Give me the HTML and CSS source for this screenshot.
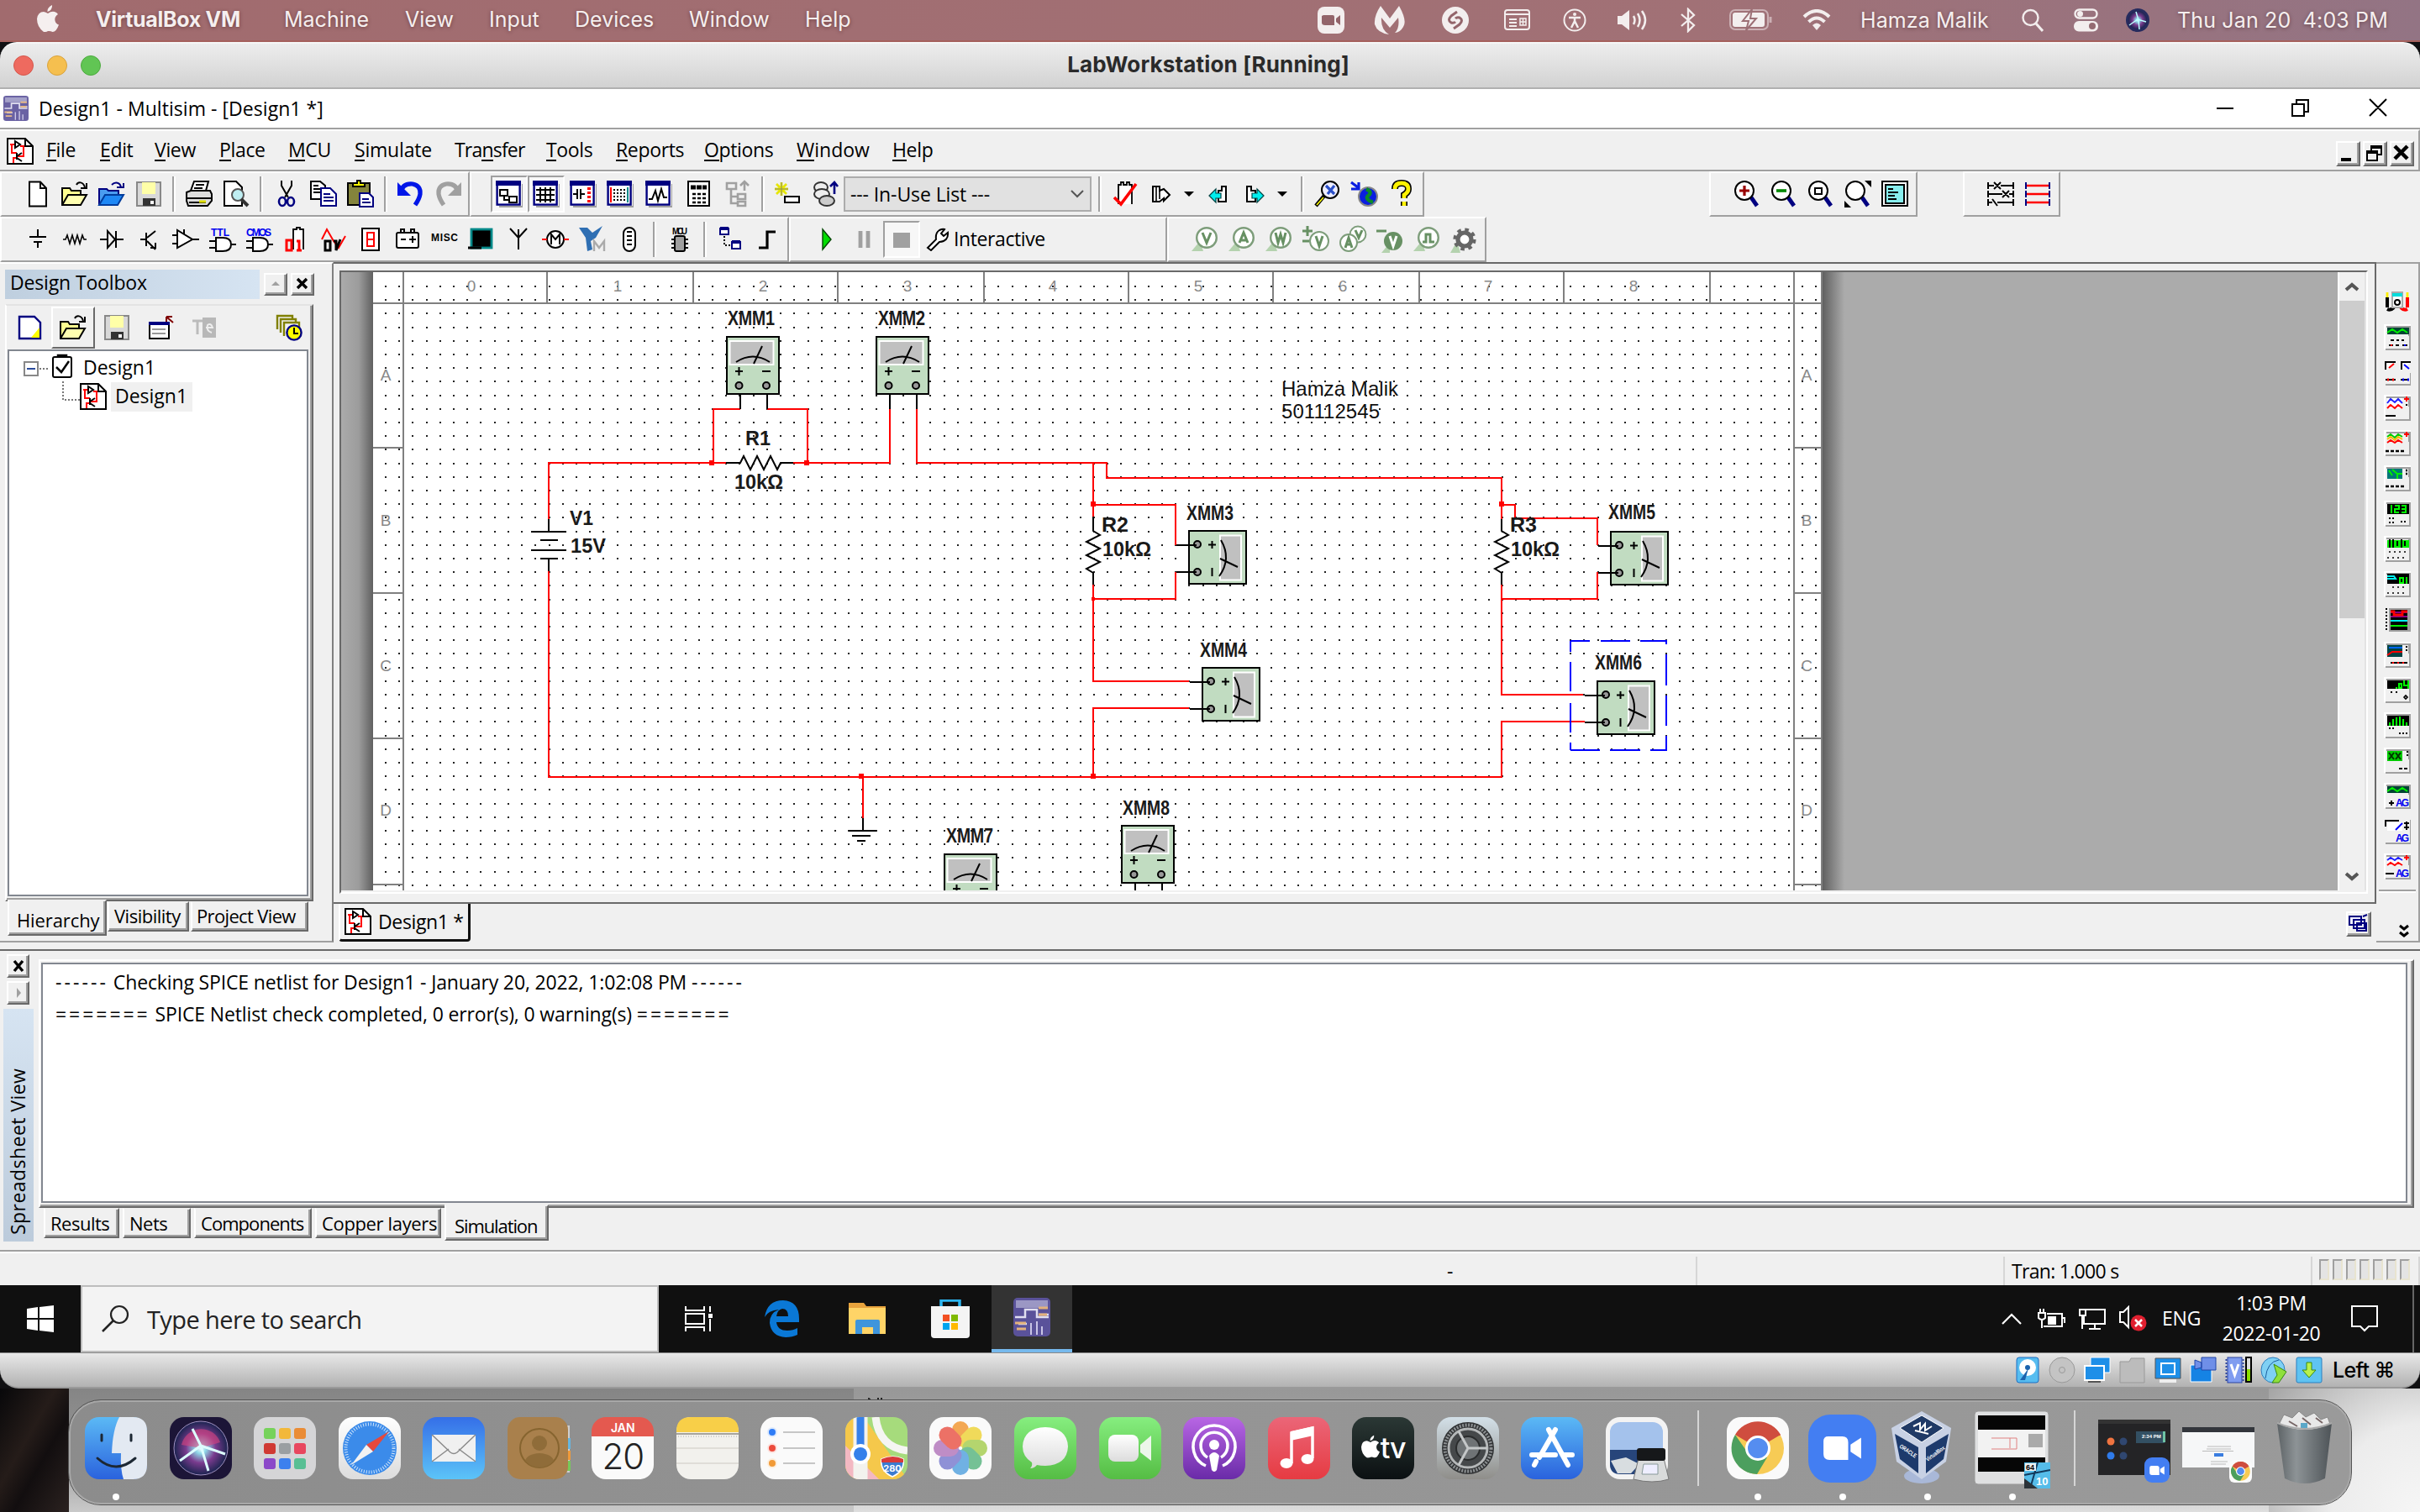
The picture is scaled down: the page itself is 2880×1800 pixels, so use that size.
FILE: index.html
```html
<!DOCTYPE html>
<html lang="en">
<head>
<meta charset="utf-8">
<title>LabWorkstation [Running]</title>
<link rel="stylesheet" href="styles.css">
</head>
<body>
<svg class="defs" width="0" height="0">
  <defs>
    <symbol id="sch" viewBox="0 0 16 16"><path d="M.5.5H11L15.500 5V15.500H.5Z" fill="#fff" stroke="#000"/><path d="M11 1V5H15" fill="none" stroke="#000"/><path d="M2 4H5M3 4V9H6M8 5H10V11H6M4 15V12H6" stroke="red" fill="none"/><path d="M5 2V6L8 4ZM6 9V13M6 11L9 9M6 12L9 14" fill="none" stroke="#000"/></symbol>
    <symbol id="mmv" viewBox="0 0 66 70" overflow="visible"><rect x="1" y="1" width="62" height="68" fill="#c1dcc1" stroke="#000" stroke-width="2"/><rect x="4.500" y="6" width="52" height="28" fill="#c0c0c0" stroke="#fff" stroke-width="2"/><path d="M12 31Q32 18 52 31M43 12L33 33M11 42H20M15.500 37V47M43 42H53" fill="none" stroke="#000" stroke-width="2"/><circle cx="15.500" cy="59" r="4" fill="#999" stroke="#000" stroke-width="2"/><circle cx="48" cy="59" r="4" fill="#999" stroke="#000" stroke-width="2"/></symbol>
    <symbol id="mmh" viewBox="0 0 70 66" overflow="visible"><rect x="1" y="1" width="68" height="63" fill="#c1dcc1" stroke="#000" stroke-width="2"/><rect x="38" y="6.500" width="25" height="53" fill="#c0c0c0" stroke="#fff" stroke-width="2"/><path d="M39 12Q52 34 37 55M38 34L59 44M24 17.500H33M28.500 13V22M28.500 45V55" fill="none" stroke="#000" stroke-width="2"/><circle cx="11" cy="17" r="4" fill="#999" stroke="#000" stroke-width="2"/><circle cx="11" cy="50" r="4" fill="#999" stroke="#000" stroke-width="2"/><path d="M-14 18H10M-14 50H10" stroke="#000" stroke-width="2"/></symbol>
    <symbol id="mag" viewBox="0 0 16 16"><path d="M10.500 10L14 15" stroke="#000080" stroke-width="2.400"/><ellipse cx="6.500" cy="6" rx="5.500" ry="5.500" fill="#fff" stroke="#000"/></symbol>
    <symbol id="ins" viewBox="0 0 16 16"><path d="M0 .5H16M.5 0V15" stroke="#fff"/><path d="M1 15H16M15.500 1V15" stroke="#a0a0a0"/><path d="M1.500 1.500H15V7" fill="none" stroke="#a0a0a0"/></symbol>
    <symbol id="probe" viewBox="0 0 16 16"><path d="M0 15L5 9L7 15Z" fill="#b4d2ae"/><circle cx="9" cy="7" r="5.900" fill="#fff" stroke="#7d9d7a" stroke-width="1.200"/></symbol>
    <symbol id="folder" viewBox="0 0 16 16"><path d="M.5 14.500V4.500H5L6 6H11.500V8" fill="#ffff90" stroke="#000"/><path d="M.5 14.500L4 8.500H15L11.500 14.500Z" fill="#ffffb0" stroke="#000"/><path d="M9 2.500C10 .5 13 .5 14 4M11.500 4.500H15V1.500" fill="none" stroke="#000"/></symbol>
    <symbol id="disk" viewBox="0 0 16 16"><path d="M1 1H15V15H1Z" fill="#d8d8d8" stroke="#888"/><path d="M4 1H12V8H4Z" fill="#ffffa8"/><path d="M4.500 10.500H12V15H4.500Z" fill="#333"/><rect x="9" y="12" width="2" height="2" fill="#fff"/></symbol>
    <symbol id="win" viewBox="0 0 16 16"><path d="M2 15.500H16V2" fill="none" stroke="#a0a0a0"/><rect x=".8" y=".8" width="13.500" height="13.500" fill="#fff" stroke="#000080" stroke-width="1.200"/><rect x="0" y="0" width="15" height="3" fill="#000080"/></symbol>
    <symbol id="cam" viewBox="0 0 16 10"><path d="M2 0H8Q10.500 0 10.500 2.500V10H2.500Q0 10 0 7.500V2Q0 0 2 0ZM11.500 3.500L16 .5V9.500L11.500 6.500Z" fill="#fff"/></symbol>
    <symbol id="apple" viewBox="0 0 26 32"><path d="M18 0Q18.500 6 12.500 8Q12 3 18 0ZM13 10Q17 7 21 8Q24 9 25 11Q20.500 14 21.500 18.500Q22 22 26 23.500Q23 32 18.500 32Q16 30.500 13 31Q10 32.500 8 32Q0 26 0 16.500Q1 8 8 8Q10.500 8.500 13 10Z" fill="currentColor"/></symbol>
    <symbol id="chrome" viewBox="0 0 74 74"><rect width="74" height="74" rx="17" fill="#fafafa"/><circle cx="37" cy="37" r="31" fill="#f7cb55"/><path d="M37 37L10 21A31 31 0 0 1 64 21Z" fill="#cf4d3f"/><path d="M37 6A31 31 0 0 1 64 22H37Z" fill="#cf4d3f"/><path d="M10 21A31 31 0 0 0 36 68L48 48L26 44Z" fill="#4c9f5e"/><circle cx="37" cy="37" r="15" fill="#fff"/><circle cx="37" cy="37" r="12" fill="#558df0"/></symbol>
    <symbol id="multi" viewBox="0 0 44 46"><rect width="44" height="46" rx="5" fill="#5a529a"/><path d="M3 3H41V12H3Z" fill="#9b97c4"/><path d="M2 23H14V14H28V23H42M6 31H16M30 20H42" stroke="#e0def0" stroke-width="2.500" fill="none"/><path d="M30 12H41M30 20H40M2 30H15M4 37H15" stroke="#e4b27c" stroke-width="3"/><path d="M21 30V44M28 28V44M34 34V44" stroke="#c9c5e6" stroke-width="2"/></symbol>
    <linearGradient id="gb" x1="0" y1="0" x2="0" y2="1"><stop offset="0" stop-color="#5bb9f5"/><stop offset="1" stop-color="#2a62dd"/></linearGradient>
    <linearGradient id="gm" x1="0" y1="0" x2="0" y2="1"><stop offset="0" stop-color="#356fe8"/><stop offset="1" stop-color="#5cc4f8"/></linearGradient>
    <linearGradient id="gg" x1="0" y1="0" x2="0" y2="1"><stop offset="0" stop-color="#86ee7f"/><stop offset="1" stop-color="#55bd44"/></linearGradient>
    <linearGradient id="gp" x1="0" y1="0" x2="0" y2="1"><stop offset="0" stop-color="#b866e4"/><stop offset="1" stop-color="#6a2ba8"/></linearGradient>
    <linearGradient id="gr" x1="0" y1="0" x2="0" y2="1"><stop offset="0" stop-color="#eb6678"/><stop offset="1" stop-color="#e63b42"/></linearGradient>
    <linearGradient id="gs" x1="0" y1="0" x2="0" y2="1"><stop offset="0" stop-color="#d3e0e8"/><stop offset="1" stop-color="#8f8e8a"/></linearGradient>
    <linearGradient id="gw" x1="0" y1="0" x2="0" y2="1"><stop offset="0" stop-color="#fff"/><stop offset="1" stop-color="#dcdcdc"/></linearGradient>
    <linearGradient id="gt" x1="0" y1="0" x2="1" y2="0"><stop offset="0" stop-color="#5d6366"/><stop offset=".35" stop-color="#8d9396"/><stop offset="1" stop-color="#4d5357"/></linearGradient>
    <radialGradient id="gi"><stop offset="0" stop-color="#fff"/><stop offset=".2" stop-color="#8fd8e8"/><stop offset=".55" stop-color="#7a3b8e"/><stop offset="1" stop-color="#1b2450"/></radialGradient>
    <linearGradient id="shl" x1="0" y1="0" x2="1" y2="0"><stop offset="0" stop-color="#ababab"/><stop offset=".55" stop-color="#9c9c9c"/><stop offset="1" stop-color="#606060"/></linearGradient>
    <linearGradient id="shr" x1="0" y1="0" x2="1" y2="0"><stop offset="0" stop-color="#606060"/><stop offset="1" stop-color="#ababab"/></linearGradient>
  </defs>
</svg>

<header class="macbar">
  <nav class="macmenu">
    <svg class="applelogo" viewBox="0 0 26 32"><use href="#apple"/></svg>
    <b>VirtualBox VM</b><span>Machine</span><span>View</span><span>Input</span><span>Devices</span><span>Window</span><span>Help</span>
  </nav>
  <div class="macstatus">
    <svg width="34" height="34" viewBox="0 0 34 34"><rect x="1" y="1" width="32" height="32" rx="8" fill="#f3eeee"/><path d="M8 11H19Q21 11 21 13V23H10Q6 23 6 20V12ZM23 15L28 11V23L23 19Z" fill="#93646a"/></svg>
    <svg width="38" height="34" viewBox="0 0 38 34"><path d="M8 0L19 15L30 0Q40 18 35 25Q31 32 25 32Q31 26 29 14L19 26L9 14Q8 28 18 34Q4 32 1 22Q0 12 8 0Z" fill="#f3eeee"/></svg>
    <svg width="34" height="34" viewBox="0 0 34 34"><circle cx="17" cy="17" r="16" fill="#f3eeee"/><path d="M19 7L12 12Q7 17 12 20Q15 21 17 19M15 27L22 22Q27 17 22 14Q19 13 17 15" fill="none" stroke="#93646a" stroke-width="3"/></svg>
    <svg width="32" height="26" viewBox="0 0 32 26"><rect x="1" y="1" width="29" height="23" rx="3" fill="none" stroke="#f3eeee" stroke-width="2"/><path d="M1 6H30M6 12H15M6 16H15M6 20H15" stroke="#f3eeee" stroke-width="2"/><path d="M19 11H26V19H19ZM19 15H26M22.500 11V19" stroke="#f3eeee" fill="none" stroke-width="1.500"/></svg>
    <svg width="30" height="30" viewBox="0 0 30 30"><circle cx="15" cy="15" r="12.500" fill="none" stroke="#f3eeee" stroke-width="2"/><circle cx="15" cy="8" r="2" fill="#f3eeee"/><path d="M8 12H22M15 12V17M15 16L11 24M15 16L19 24" stroke="#f3eeee" stroke-width="2.500"/></svg>
    <svg width="40" height="28" viewBox="0 0 40 28"><path d="M1 9H6L15 2V26L6 19H1Z" fill="#f3eeee"/><path d="M20 9Q23 14 20 19M25 6Q30 14 25 22M30 3Q38 14 30 25" fill="none" stroke="#f3eeee" stroke-width="2.500"/></svg>
    <svg width="20" height="30" viewBox="0 0 20 30"><path d="M2 8L17 21L10 28V2L17 9L2 22" fill="none" stroke="#f3eeee" stroke-width="2.300"/></svg>
    <svg width="52" height="26" viewBox="0 0 52 26"><rect x="1" y="1" width="45" height="23" rx="6" fill="none" stroke="#cbb0b4" stroke-width="2"/><rect x="4" y="4" width="38" height="17" rx="3" fill="#f3eeee"/><path d="M27 0L16 14H23L20 25L32 11H25Z" fill="#f3eeee" stroke="#9c6f75" stroke-width="2"/><path d="M49 9V16" stroke="#cbb0b4" stroke-width="3"/></svg>
    <svg width="34" height="26" viewBox="0 0 34 26"><path d="M2 9Q17 -5 32 9M7.500 15Q17 6 26.500 15" fill="none" stroke="#f3eeee" stroke-width="4"/><path d="M12 19Q17 14 22 19L17 25Z" fill="#f3eeee"/></svg>
    <span>Hamza Malik</span>
    <svg width="26" height="28" viewBox="0 0 26 28"><circle cx="10.500" cy="11" r="9" fill="none" stroke="#f3eeee" stroke-width="2.400"/><path d="M17 18L25 27" stroke="#f3eeee" stroke-width="3"/></svg>
    <svg width="30" height="28" viewBox="0 0 30 28"><rect x="1.500" y="1.500" width="26" height="10" rx="5" fill="none" stroke="#f3eeee" stroke-width="2.400"/><circle cx="7.500" cy="6.500" r="3.500" fill="#f3eeee"/><rect x="0" y="15" width="29" height="12.500" rx="6" fill="#f3eeee"/><circle cx="22" cy="21" r="4" fill="#946b72"/></svg>
    <svg width="28" height="28" viewBox="0 0 28 28"><circle cx="14" cy="14" r="14" fill="#262b5e"/><circle cx="14" cy="14" r="11" fill="url(#gi)"/><path d="M4 20L14 13L24 16M12 4L15 14L16 25" stroke="#bff" stroke-width="1.500" fill="none"/></svg>
    <span>Thu Jan 20&nbsp; 4:03 PM</span>
  </div>
</header>

<main class="vm">
  <div class="vmtitle"><div class="lights"><i></i><i></i><i></i></div><h1>LabWorkstation [Running]</h1></div>

  <div class="wtitle">
    <svg class="wicon" viewBox="0 0 44 46" preserveAspectRatio="none"><use href="#multi"/></svg>
    <span>Design1 - Multisim - [Design1 *]</span>
    <svg class="wctl" viewBox="0 0 204 24"><path d="M1 13H21M91 8H105V22H91ZM96 7V3H110V17H106M183 2L203 22M203 2L183 22" fill="none" stroke="#000" stroke-width="2"/></svg>
  </div>

  <div class="menubar">
    <svg width="32" height="32"><use href="#sch"/></svg>
    <span><u>F</u>ile</span><span><u>E</u>dit</span><span><u>V</u>iew</span><span><u>P</u>lace</span><span><u>M</u>CU</span><span><u>S</u>imulate</span><span>Tra<u>n</u>sfer</span><span><u>T</u>ools</span><span><u>R</u>eports</span><span><u>O</u>ptions</span><span><u>W</u>indow</span><span><u>H</u>elp</span>
    <div class="mdictl">
      <i class="btn"><svg viewBox="0 0 24 24"><path d="M4 20H16" stroke="#000" stroke-width="4"/></svg></i>
      <i class="btn"><svg viewBox="0 0 24 24"><path d="M8 9V5H20V14H15M3 11H15V21H3Z" fill="none" stroke="#000" stroke-width="2"/><path d="M7 5H21M2 11H16" stroke="#000" stroke-width="4"/></svg></i>
      <i class="btn"><svg viewBox="0 0 24 24"><path d="M4 4L19 19M19 4L4 19" stroke="#000" stroke-width="4.500"/></svg></i>
    </div>
  </div>

  <div class="toolrow">
    <div class="group g1">
      <i class="c"><svg viewBox="0 0 16 16"><path d="M3 .8H9.500L13 4.500V15.200H3Z" fill="#fff" stroke="#000"/><path d="M9.500 1V4.500H13" fill="none" stroke="#000"/></svg></i>
      <i class="c"><svg><use href="#folder"/></svg></i>
      <i class="c"><svg viewBox="0 0 16 16"><path d="M.5 14.500V5H5L6 6H12V8" fill="#4a9cf0" stroke="#000080"/><path d="M.5 14.500L4 8.500H15L11.500 14.500Z" fill="#1e88f5" stroke="#003c9c"/><path d="M8 2.500C10 .5 13 1 13.500 4M11 4H15V1.500" fill="none" stroke="#000080"/></svg></i>
      <i class="c"><svg><use href="#disk"/></svg></i>
      <i class="sep"></i>
      <i class="c"><svg viewBox="0 0 16 16"><path d="M5 .5H13.500L12 6H3Z" fill="#fff" stroke="#000"/><path d="M6 2.500H11M5 4.500H10M3 8.500H13" stroke="#000"/><path d="M.5 7L3 6H14.500L15.500 8V12L13 15H1.500L.5 12Z" fill="#ddd" stroke="#000"/><path d="M1 10.500H15M2 13H12" stroke="#000"/><path d="M8 12.500H12" stroke="#dd0" stroke-width="1.500"/></svg></i>
      <i class="c"><svg viewBox="0 0 16 16"><path d="M1 .5H8L11.500 4V15H1Z" fill="#fff" stroke="#000"/><circle cx="9" cy="8.500" r="3.500" fill="#bfeef2" stroke="#555"/><path d="M11 11L15 15" stroke="#333" stroke-width="2"/></svg></i>
      <i class="sep"></i>
      <i class="c"><svg viewBox="0 0 16 16"><path d="M5 0V3L9 10M11 0V3L7 10" fill="none" stroke="#000"/><ellipse cx="5.500" cy="12.500" rx="2" ry="2.500" fill="none" stroke="#000080" stroke-width="1.300"/><ellipse cx="10.500" cy="12.500" rx="2" ry="2.500" fill="none" stroke="#000080" stroke-width="1.300"/></svg></i>
      <i class="c"><svg viewBox="0 0 16 16"><path d="M.5.5H6L9 3V11H.5Z" fill="#fff" stroke="#000"/><path d="M2 3H5M2 5H7M2 7H7" stroke="#000"/><path d="M6.500 4.500H12L15.500 8V15H6.500Z" fill="#fff" stroke="#000080"/><path d="M8 8H12M8 10H14M8 12H14" stroke="#000080"/></svg></i>
      <i class="c"><svg viewBox="0 0 16 16"><path d="M.5 1.500H13.500V14.500H.5Z" fill="#84843c" stroke="#000"/><path d="M3.500 3.500H10.500V1.500H8V0H6V1.500H3.500Z" fill="#ff0" stroke="#000"/><path d="M7.500 7.500H13L15.500 10V15.500H7.500Z" fill="#fff" stroke="#000080"/><path d="M9 11H13M9 13H14" stroke="#000080"/></svg></i>
      <i class="sep"></i>
      <i class="c"><svg viewBox="0 0 16 16"><path d="M2 7Q3 1.500 9 2Q14 3 13.500 8Q13 11 10.500 14.500" fill="none" stroke="#0016e8" stroke-width="2.600"/><path d="M0 1V9H8Z" fill="#0016e8"/></svg></i>
      <i class="c"><svg viewBox="0 0 16 16"><path d="M14 7Q13 1.500 7 2Q2 3 2.500 8Q3 11 5.500 14.500" fill="none" stroke="#a0a0a0" stroke-width="2.600"/><path d="M16 1V9H8Z" fill="#a0a0a0"/></svg></i>
    </div>
    <div class="group g2">
      <i class="c on"><svg viewBox="0 0 16 16"><use href="#win"/><path d="M2.500 5.500H7V9H2.500ZM8 9.500H12.500V13H8ZM5 9V11.500H8" fill="#fff" stroke="#000"/></svg></i>
      <i class="c on"><svg viewBox="0 0 16 16"><use href="#win"/><path d="M2 5.500H13M2 8.500H13M2 11.500H13M4.500 4V13M7.500 4V13M10.500 4V13" stroke="#000"/></svg></i>
      <i class="c"><svg viewBox="0 0 16 16"><use href="#win"/><path d="M2 8H4.500M4.500 5V11M6.500 5V11M6.500 8H9" stroke="#000"/><path d="M11.500 4V13" stroke="red" stroke-width="2" stroke-dasharray="1.500 1"/></svg></i>
      <i class="c"><svg viewBox="0 0 16 16"><use href="#win"/><path d="M2.500 4V13" stroke="red"/><path d="M4 5.500H11M4 7.500H11M4 9.500H11M4 11.500H11" stroke="#000" stroke-dasharray="1 1"/><path d="M12.500 4V13" stroke="#088"/></svg></i>
      <i class="c wide"><svg viewBox="0 0 16 16"><use href="#win"/><path d="M2 11L4 11L6 6L7.500 12L9.500 5L11 10H13" fill="none" stroke="#000"/></svg></i>
      <i class="c wide"><svg viewBox="0 0 16 16"><rect x="1.500" y=".5" width="12.500" height="14.500" fill="#fff" stroke="#000"/><path d="M3 4H12.500" stroke="#000" stroke-width="2.500" stroke-dasharray="3 .5"/><path d="M4 8H12M4 10.500H12M4 13H12" stroke="#000" stroke-width="1.300" stroke-dasharray="2 1"/></svg></i>
      <i class="c"><svg viewBox="0 0 16 16"><path d="M1.500 1.500H7V5H1.500ZM8 8H12.500V11H8ZM8 12.500H12.500V15H8ZM4 5V13.500H8M4 9.500H8M12 6V1M9.500 3L12 .5L14.500 3" fill="none" stroke="#a0a0a0" stroke-width="1.300"/></svg></i>
      <i class="sep"></i>
      <i class="c"><svg viewBox="0 0 16 16"><path d="M0 5H8M4 1V9M1 2L7 8M7 2L1 8" stroke="#e6e600" stroke-width="1.400"/><path d="M4 1V9M0 5H8" stroke="#886" stroke-width=".5"/><path d="M6 9.500H14.500V13H6Z" fill="#fff" stroke="#000"/></svg></i>
      <i class="c"><svg viewBox="0 0 16 16"><ellipse cx="5.500" cy="4" rx="4" ry="3" fill="#eee" stroke="#333"/><ellipse cx="6" cy="8" rx="4.500" ry="3" fill="#eee" stroke="#333"/><ellipse cx="9" cy="12" rx="4.500" ry="3" fill="#ccc" stroke="#333"/><path d="M13.500 8V2M11 3.500L13.500 1L15.500 3.500" stroke="#000080" fill="none" stroke-width="1.300"/></svg></i>
      <div class="combo"><span>--- In-Use List ---</span><svg width="18" height="12" viewBox="0 0 18 12"><path d="M2 2L9 9L16 2" fill="none" stroke="#555" stroke-width="2"/></svg></div>
      <i class="sep"></i>
      <i class="c"><svg viewBox="0 0 16 16"><path d="M4 14V2.500H5.500V1H7V2.500H9V1H10.500V2.500H12V14" fill="#fff" stroke="#000" stroke-width=".9"/><path d="M1.500 10L5.500 14L14.500 2" fill="none" stroke="red" stroke-width="1.800"/></svg></i>
      <i class="c"><svg viewBox="0 0 16 16"><path d="M2.500 12.500V3.500H6.500V6L9 5L12.500 8.500L9 12V10.500L6.500 12.500Z" fill="#fff" stroke="#000"/><path d="M4.500 4V12M6.500 6V11" stroke="#000" stroke-width=".8"/></svg></i><i class="caret first"></i>
      <i class="c"><svg viewBox="0 0 16 16"><path d="M12.500 12.500V3.500H10V6H8V12.500Z" fill="#fff" stroke="#000"/><path d="M2.500 9L6.500 5V7.500H9.500V10.500H6.500V13Z" fill="#0ee" stroke="#044" stroke-width=".6"/></svg></i>
      <i class="c"><svg viewBox="0 0 16 16"><path d="M3 12.500V3.500H5.500V6H8V12.500Z" fill="#fff" stroke="#000"/><path d="M13 9L9 5V7.500H6V10.500H9V13Z" fill="#0ee" stroke="#044" stroke-width=".6"/></svg></i><i class="caret"></i>
      <i class="sep s2nd"></i>
      <i class="c"><svg viewBox="0 0 16 16"><circle cx="9.500" cy="5.500" r="5" fill="#eef" stroke="#000"/><path d="M7 3L12 8M12 3L8 8" stroke="#2b50c8" stroke-width="1.600"/><path d="M6 9L1 15" stroke="#000" stroke-width="2.200"/><path d="M5.500 10L1.500 14.500" stroke="#ff0" stroke-width=".8"/></svg></i>
      <i class="c"><svg viewBox="0 0 16 16"><circle cx="10" cy="9.500" r="5.500" fill="#0a1ee0" stroke="#888"/><path d="M9 5Q13 7 10 9Q8 11 13 13" stroke="#0a8a2a" stroke-width="2.200" fill="none"/><path d="M0 1L4 4M4.500 1V5H0" stroke="#0a1ee0" fill="none" stroke-width="1.600"/></svg></i>
      <i class="c"><svg viewBox="0 0 16 16"><path d="M4 5Q4 1.500 8 1.500Q12 1.500 12 5Q12 7 9.500 8.500V10.500M9.500 12.500V15" fill="none" stroke="#000" stroke-width="4"/><path d="M4 5Q4 1.500 8 1.500Q12 1.500 12 5Q12 7 9.500 8.500V10.500M9.500 12.500V15" fill="none" stroke="#fff200" stroke-width="2.400"/></svg></i>
    </div>
    <div class="group g3">
      <i class="c"><svg viewBox="0 0 16 16"><use href="#mag"/><path d="M3.500 6H9.500M6.500 3V9" stroke="#900" stroke-width="1.600"/></svg></i>
      <i class="c"><svg viewBox="0 0 16 16"><use href="#mag"/><path d="M3.500 6H9.500" stroke="#080" stroke-width="1.800"/></svg></i>
      <i class="c"><svg viewBox="0 0 16 16"><use href="#mag"/><path d="M4.500 4.500H8.500V8H4.500Z" fill="none" stroke="#000"/></svg></i>
      <i class="c"><svg viewBox="0 0 16 16"><use href="#mag"/><path d="M12 0H16V4ZM0 12V16H4Z" fill="#000"/></svg></i>
      <i class="c"><svg viewBox="0 0 16 16"><rect x=".5" y=".5" width="15" height="14.500" fill="#fff" stroke="#000"/><rect x="2.500" y="2.500" width="11" height="11" fill="#8ee" stroke="#000"/><path d="M4 5H7M4 7H10M4 9H8M4 11H9" stroke="#000"/></svg></i>
    </div>
    <div class="group g4">
      <i class="c"><svg viewBox="0 0 16 16"><path d="M0 3H4M8 3H16M0 8H9M13 8H16M0 13H3M6 13H16M.5 1V5M15.500 1V5M.5 6V10M15.500 6V10M.5 11V15M15.500 11V15M4 1L8 5M8 1L4 5M9 6L13 10M13 6L9 10M3 11L6 15" stroke="#000"/></svg></i>
      <i class="c"><svg viewBox="0 0 16 16"><path d="M1 3H15M1 8H15M1 13H15" stroke="red" stroke-width="1.200"/><path d="M1 1V5M15 1V5M1 6V10M15 6V10M1 11V15M15 11V15" stroke="#000080"/></svg></i>
    </div>
  </div>

  <div class="toolrow row2">
    <div class="group h1">
      <i class="c"><svg viewBox="0 0 16 16"><path d="M8 2V6M3 6.500H13M5.500 9.500H10.500M8 10V13" stroke="#000"/></svg></i>
      <i class="c"><svg viewBox="0 0 16 16"><path d="M1 8H2.500L3.500 5.500L5 10.500L6.500 5.500L8 10.500L9.500 5.500L11 10.500L12.500 5.500L13.500 8H15" fill="none" stroke="#000" stroke-width=".8"/></svg></i>
      <i class="c"><svg viewBox="0 0 16 16"><path d="M1 8H5M5.500 3V13L10 8ZM10.500 3V13M10.500 8H15" fill="none" stroke="#000"/></svg></i>
      <i class="c"><svg viewBox="0 0 16 16"><path d="M3 8H6M6.500 4V12M7 7L12 3M7 9L12 14M9 13H12V10" fill="none" stroke="#000"/></svg></i>
      <i class="c"><svg viewBox="0 0 16 16"><path d="M3 2.500V13L12 8ZM0 5.500H3M0 10.500H3M12 8H16M7 2V5" fill="#fff" stroke="#000"/></svg></i>
      <i class="c"><svg viewBox="0 0 16 16"><text class="tiny blue" x="1" y="6" textLength="11">TTL</text><path d="M4 7H8Q13 7 13 11Q13 15 8 15H4ZM0 9H4M0 13H4M13 11H16" fill="#fff" stroke="#000"/></svg></i>
      <i class="c"><svg viewBox="0 0 16 16"><text class="tiny blue" x="0" y="6" textLength="15">CMOS</text><path d="M4 7H8Q13 7 13 11Q13 15 8 15H4ZM0 9H4M0 13H4M13 11H16" fill="#fff" stroke="#000"/></svg></i>
      <i class="c"><svg viewBox="0 0 16 16"><path d="M6 14V2H8V1H10V2H12V14" fill="#fff" stroke="#000" stroke-width=".9"/><path d="M2 8.500H5V14.500H2ZM8 9H9.500V15M8 14.500H11" fill="none" stroke="red" stroke-width="1.500"/></svg></i>
      <i class="c"><svg viewBox="0 0 16 16"><path d="M1 8L4 2L8 9L11 13L15 6" fill="none" stroke="red"/><path d="M3 9H6V14.500H3ZM8 9H9.500V14.500L12 8" fill="none" stroke="#000" stroke-width="1.500"/></svg></i>
      <i class="c"><svg viewBox="0 0 16 16"><rect x="3" y="1.500" width="10" height="13" fill="#fff" stroke="#000"/><path d="M6 4H10V12H6ZM6 8H10" stroke="red" fill="none"/></svg></i>
      <i class="c"><svg viewBox="0 0 16 16"><rect x="1.500" y="4" width="13" height="9" rx="1" fill="#fff" stroke="#000"/><path d="M4 4V2H6V4M10 4V2H12V4M4 8H7M9 8H13M11 6V10" fill="none" stroke="#000"/></svg></i>
      <i class="c"><svg viewBox="0 0 16 16"><text class="tiny" x="0" y="9" textLength="16">MISC</text></svg></i>
      <i class="c"><svg viewBox="0 0 16 16"><rect x="2" y="2" width="12" height="11" fill="#000" stroke="#088" stroke-width="1.400"/><path d="M0 13H8" stroke="#000" stroke-width="1.500"/></svg></i>
      <i class="c"><svg viewBox="0 0 16 16"><path d="M3 1.500L8 7L13 1.500M8 2V14" fill="none" stroke="#000"/></svg></i>
      <i class="c"><svg viewBox="0 0 16 16"><circle cx="8" cy="8" r="5" fill="#fff" stroke="#000"/><path d="M5.500 11V5L8 8L10.500 5V11" fill="none" stroke="#000"/><path d="M0 8H3M13 8H16" stroke="red"/></svg></i>
      <i class="c"><svg viewBox="0 0 16 16"><path d="M0 1H5L8 4L14 0L10 7L7 9L8 14L5 15L4 7Z" fill="#2f6fb3"/><path d="M9 15V9L12 13L15 9V15" fill="none" stroke="#aaa" stroke-width="1.200"/></svg></i>
      <i class="c"><svg viewBox="0 0 16 16"><rect x="4.500" y="1" width="7" height="14" rx="3.500" fill="#fff" stroke="#000"/><path d="M8 3V13" stroke="#000" stroke-dasharray="1 1.500" stroke-width="3"/></svg></i>
      <i class="sep"></i>
      <i class="c"><svg viewBox="0 0 16 16"><text class="tiny mcu" x="3.500" y="5" textLength="9">MCU</text><rect x="5" y="6" width="6" height="9" rx="1" fill="#a0a0a0" stroke="#000"/><path d="M3 8H13M3 10.500H13M3 13H13" stroke="#000" stroke-dasharray="2 6"/></svg></i>
      <i class="sep"></i>
      <i class="c"><svg viewBox="0 0 16 16"><path d="M2 1.500H7V5H2ZM9 9.500H14V13.500H9Z" fill="#fff" stroke="#000080"/><path d="M2 1.500H7M9 9.500H14" stroke="#000080" stroke-width="2"/><path d="M4.500 6V11.500H9" fill="none" stroke="#000" stroke-dasharray="1 1"/></svg></i>
      <i class="c"><svg viewBox="0 0 16 16"><path d="M3 13H8V3.500H13" fill="none" stroke="#000" stroke-width="1.600"/></svg></i>
    </div>
    <div class="group h2">
      <i class="c"><svg viewBox="0 0 16 16"><path d="M5 2V14L10 8Z" fill="#0d0" stroke="#040" stroke-width=".7"/></svg></i>
      <i class="c"><svg viewBox="0 0 16 16"><path d="M5.500 3V13M10 3V13" stroke="#a0a0a0" stroke-width="2.400"/></svg></i>
      <i class="c stop on"><svg viewBox="0 0 16 16"><rect x="3" y="4" width="10" height="9" fill="#a0a0a0"/></svg></i>
      <svg width="28" height="28" viewBox="0 0 14 14"><path d="M1 12L6 7Q5.500 3 8 1.500Q10 .5 11 1L9 3.500L10.500 5L13 3Q13.500 8 8 8.500L3 13.500Z" fill="#fff" stroke="#000"/></svg>
      <span class="label">Interactive</span>
    </div>
    <div class="group h3">
      <i class="c"><svg viewBox="0 0 16 16"><use href="#probe"/><path d="M6.500 4L9 10L11.500 4" class="pr"/></svg></i>
      <i class="c"><svg viewBox="0 0 16 16"><use href="#probe"/><path d="M6.500 10L9 4L11.500 10M7.500 8.500H10.500" class="pr"/></svg></i>
      <i class="c"><svg viewBox="0 0 16 16"><use href="#probe"/><path d="M6 4L7.500 10L9 5L10.500 10L12 4" class="pr"/></svg></i>
      <i class="c"><svg viewBox="0 0 16 16"><circle cx="10" cy="9" r="5.500" fill="#fff" stroke="#7d9d7a"/><path d="M8 6L10 12L12 6M0 3H6M3 0V6M0 9H4" class="pr"/></svg></i>
      <i class="c"><svg viewBox="0 0 16 16"><circle cx="11" cy="5" r="4.700" fill="#fff" stroke="#7d9d7a"/><circle cx="5.500" cy="10" r="5" fill="#fff" stroke="#7d9d7a"/><path d="M9.500 2.500L11.500 7L13.500 2.500M3.500 13L5.500 7L7.500 13M4 11H7" class="pr"/></svg></i>
      <i class="c"><svg viewBox="0 0 16 16"><path d="M3 16L8 10V16Z" fill="#b4d2ae"/><circle cx="10" cy="9" r="5.500" fill="#679063"/><path d="M0 3H6" class="pr"/><path d="M8 6L10 12L12 6" stroke="#fff" fill="none" stroke-width="1.500"/></svg></i>
      <i class="c"><svg viewBox="0 0 16 16"><use href="#probe"/><path d="M5.500 9.500H7.500V5H10V9.500H12.500" class="pr"/></svg></i>
      <i class="c"><svg viewBox="0 0 16 16"><path d="M0 16L4 9L6 16Z" fill="#b4d2ae"/><circle cx="8.500" cy="8" r="4" fill="#fff" stroke="#666" stroke-width="2.600"/><circle cx="8.500" cy="8" r="5.800" fill="none" stroke="#666" stroke-width="2" stroke-dasharray="2.300 2.250"/></svg></i>
    </div>
  </div>

  <div class="work">
    <aside class="toolbox">
      <div class="tbhead"><span>Design Toolbox</span><i class="btn"><svg viewBox="0 0 24 22"><path d="M7 13L12 8L17 13Z" fill="#a0a0a0"/></svg></i><i class="btn"><svg viewBox="0 0 24 22"><path d="M6 5L17 16M17 5L6 16" stroke="#000" stroke-width="3.400"/></svg></i></div>
      <div class="tbpanel">
        <div class="tbtools">
          <i class="c"><svg viewBox="0 0 16 16"><path d="M2 1.500H11L14.500 5V14.500H2Z" fill="#fff" stroke="#000080" stroke-width="1.200"/><path d="M9 14L14 8V14Z" fill="#ff0"/></svg></i>
          <i class="c raised"><svg><use href="#folder"/></svg></i>
          <i class="c"><svg><use href="#disk"/></svg></i>
          <i class="c"><svg viewBox="0 0 16 16"><rect x="1.500" y="5" width="11.500" height="9.500" fill="#fff" stroke="#000"/><path d="M1 5.500H13.500" stroke="#000080" stroke-width="2"/><path d="M3 9H11M3 11.500H11" stroke="#999"/><path d="M11.500 1.500H15M11.500 1.500V4.500M12 2L15.500 5" stroke="#800000"/></svg></i>
          <i class="c"><svg viewBox="0 0 16 16"><path d="M1 4H7M4 4V12" stroke="#bbb" stroke-width="1.500"/><rect x="7" y="2" width="8" height="12" fill="#b8b8b8"/><path d="M9 8H13Q12 5 10 6.500Q9 10 12.500 11" stroke="#eee" fill="none"/></svg></i>
          <i class="c last"><svg viewBox="0 0 16 16"><path d="M1 9V1H10V3M3 11V3H12V5M5 13V5H14V8" fill="none" stroke="#808000" stroke-width="1.200"/><circle cx="11" cy="11" r="4.300" fill="#ff0" stroke="#000080" stroke-width="1.200"/><path d="M11 8V11.500H13.500" fill="none" stroke="#000"/></svg></i>
        </div>
        <div class="tree">
          <svg class="treelines" viewBox="0 0 84 70"><rect x="2" y="15" width="16" height="16" fill="#fff" stroke="#888" stroke-width="2"/><path d="M5 23H15" stroke="#2b4c9c" stroke-width="2"/><path d="M20 23H32M48 38V60H68" fill="none" stroke="#777" stroke-width="2" stroke-dasharray="2 2"/><rect x="36" y="9" width="22" height="24" rx="2" fill="#fff" stroke="#000" stroke-width="2"/><path d="M42 10V7H52V10M40 21L46 27L55 14" fill="none" stroke="#000" stroke-width="2.500"/></svg>
          <div class="node n1">Design1</div>
          <div class="node n2"><svg width="32" height="32"><use href="#sch"/></svg><span>Design1</span></div>
        </div>
      </div>
      <div class="tabs tbtabs"><span class="tab active">Hierarchy</span><span class="tab">Visibility</span><span class="tab">Project View</span></div>
    </aside>

    <section class="mdi">
      <div class="docframe">
        <div class="canvaswrap">
          <svg class="circuit" width="2376" height="736" viewBox="406 324 2376 736">
            <rect x="406" y="324" width="2376" height="736" fill="#ababab"/>
            <rect x="406" y="324" width="38" height="736" fill="url(#shl)"/>
            <rect x="2169" y="324" width="26" height="736" fill="url(#shr)"/>
            <rect x="444" y="324" width="1725" height="736" fill="#fff"/>
            <path class="dots" d="M458 341H2168M458 357H2168M458 373H2168M458 390H2168M458 406H2168M458 422H2168M458 438H2168M458 454H2168M458 471H2168M458 487H2168M458 503H2168M458 519H2168M458 535H2168M458 552H2168M458 568H2168M458 584H2168M458 600H2168M458 616H2168M458 633H2168M458 649H2168M458 665H2168M458 681H2168M458 697H2168M458 714H2168M458 730H2168M458 746H2168M458 762H2168M458 778H2168M458 795H2168M458 811H2168M458 827H2168M458 843H2168M458 859H2168M458 876H2168M458 892H2168M458 908H2168M458 924H2168M458 940H2168M458 957H2168M458 973H2168M458 989H2168M458 1005H2168M458 1021H2168M458 1038H2168M458 1054H2168"/>
            <path class="ruler" d="M444 361H2169M480 324V1060M2135 324V1060M2168 324V1060M651 324V361M825 324V361M997 324V361M1171 324V361M1343 324V361M1515 324V361M1689 324V361M1861 324V361M2035 324V361M444 533H480M444 706H480M444 879H480M444 1053H480M2135 533H2169M2135 706H2169M2135 879H2169M2135 1053H2169"/>
            <g class="rl"><text x="561" y="347">0</text><text x="735" y="347">1</text><text x="908" y="347">2</text><text x="1080" y="347">3</text><text x="1253" y="347">4</text><text x="1426" y="347">5</text><text x="1598" y="347">6</text><text x="1771" y="347">7</text><text x="1944" y="347">8</text><text x="459" y="453">A</text><text x="459" y="626">B</text><text x="459" y="799">C</text><text x="459" y="971">D</text><text x="2150" y="453">A</text><text x="2150" y="626">B</text><text x="2150" y="799">C</text><text x="2150" y="971">D</text></g>
            <path class="wire" d="M653 618V551H864M847 551H849V487H881M913 487H961V551M944 551H1059V487M1091 487V551H1317V569H1787V618M1301 551V615M1301 601H1399V649M1301 696V811H1415M1399 681V713H1301M1415 843H1301V925M653 680V925H1787V859H1886M1027 925V974M1787 601H1803V617H1901V649M1901 681V713H1787M1787 696V827H1884"/>
            <path class="dot" d="M844 548h6v6h-6zM957 548h6v6h-6zM1298 597h6v6h-6zM1298 921h6v6h-6zM1022 921h6v6h-6zM1784 597h6v6h-6zM1299 711h4v4h-4z"/>
            <path class="sym" d="M653 618V633M632 633H674M643 643H664M632 655H674M643 665H664M653 665V680M881 466V487M913 466V487M1059 466V487M1091 466V487M1351 1050V1060M1383 1050V1060M1027 974V989M1010 989H1043M1014 995H1036M1020 1001H1030"/>
            <path class="zig" d="M864 551H881L885 543L893 559L901 543L909 559L917 543L925 559L929 551H944M1301 615V632L1309 637L1293 645L1309 653L1293 661L1309 669L1293 677L1301 682V696M1787 618V632L1795 637L1779 645L1795 653L1779 661L1795 669L1779 677L1787 682V696"/>
            <use href="#mmv" x="864" y="400" width="66" height="70"/><use href="#mmv" x="1042" y="400" width="66" height="70"/><use href="#mmv" x="1123" y="1016" width="66" height="70"/><use href="#mmv" x="1334" y="982" width="66" height="70"/>
            <use href="#mmh" x="1414" y="631" width="70" height="66"/><use href="#mmh" x="1430" y="794" width="70" height="66"/><use href="#mmh" x="1916" y="632" width="70" height="66"/><use href="#mmh" x="1900" y="810" width="70" height="66"/>
            <path d="M1869 763H1892M1905 763H1940M1952 763H1984M1869 893H1904M1916 893H1952M1964 893H1984M1869 763V776M1869 788V823M1869 837V872M1869 884V893M1983 763V767M1983 779V816M1983 828V864M1983 876V893" stroke="#00f" stroke-width="2"/>
            <g class="lb">
              <text x="866" y="387" textLength="56" lengthAdjust="spacingAndGlyphs">XMM1</text><text x="1045" y="387" textLength="56" lengthAdjust="spacingAndGlyphs">XMM2</text><text x="1412" y="619" textLength="56" lengthAdjust="spacingAndGlyphs">XMM3</text><text x="1428" y="782" textLength="56" lengthAdjust="spacingAndGlyphs">XMM4</text><text x="1914" y="618" textLength="56" lengthAdjust="spacingAndGlyphs">XMM5</text><text x="1898" y="797" textLength="56" lengthAdjust="spacingAndGlyphs">XMM6</text><text x="1126" y="1003" textLength="56" lengthAdjust="spacingAndGlyphs">XMM7</text><text x="1336" y="970" textLength="56" lengthAdjust="spacingAndGlyphs">XMM8</text>
              <text x="887" y="530" textLength="30" lengthAdjust="spacingAndGlyphs">R1</text><text x="874" y="582" textLength="58" lengthAdjust="spacingAndGlyphs">10kΩ</text><text x="1311" y="633" textLength="32" lengthAdjust="spacingAndGlyphs">R2</text><text x="1312" y="662" textLength="58" lengthAdjust="spacingAndGlyphs">10kΩ</text><text x="1797" y="633" textLength="32" lengthAdjust="spacingAndGlyphs">R3</text><text x="1798" y="662" textLength="58" lengthAdjust="spacingAndGlyphs">10kΩ</text><text x="678" y="625" textLength="28" lengthAdjust="spacingAndGlyphs">V1</text><text x="679" y="658" textLength="42" lengthAdjust="spacingAndGlyphs">15V</text>
            </g>
            <g class="note"><text x="1525" y="471" textLength="139">Hamza Malik</text><text x="1525" y="498" textLength="117">501112545</text></g>
          </svg>
          <div class="scroll"><svg width="30" height="34" viewBox="0 0 30 34"><path d="M8 21L15 15L22 21" fill="none" stroke="#555" stroke-width="4"/></svg><i></i><svg class="down" width="30" height="34" viewBox="0 0 30 34"><path d="M8 14L15 20L22 14" fill="none" stroke="#555" stroke-width="4"/></svg></div>
        </div>
      </div>
      <div class="doctabs"><div class="doctab"><svg width="32" height="32"><use href="#sch"/></svg><span>Design1 *</span></div><i class="btn"><svg viewBox="0 0 24 24"><path d="M2 4H16V14H2ZM7 8H20V18H7ZM11 12H22V21H11Z" fill="#eef" stroke="#000080" stroke-width="2"/><path d="M18 4L23 2" stroke="#000080" stroke-width="2"/></svg></i></div>
    </section>

    <aside class="instruments">
      <i><svg viewBox="0 0 16 16"><path d="M2 2V6M14 2V6" stroke="#fe0" stroke-width="1.400"/><path d="M2 5V11M2 12Q4 13 6 11" fill="none" stroke="#000" stroke-width="2"/><path d="M14 5V11M14 12Q12 13 10 11" fill="none" stroke="red" stroke-width="2"/><rect x="5" y="2" width="6" height="9" fill="#fff" stroke="#aaa"/><path d="M5 3.500H11" stroke="#0dd" stroke-width="2"/><circle cx="8" cy="8" r="1.500" fill="none" stroke="#000"/></svg></i>
      <i><svg viewBox="0 0 16 16"><use href="#ins"/><rect x="2" y="2" width="13" height="4" fill="#043"/><path d="M2 5L5 3L8 5L11 3L14 5" stroke="#0e0" fill="none"/><path d="M4 9.500H6M7.500 9.500H9M10.500 9.500H12M3 12.500H5.500M7 12.500H9M11 12.500H14" stroke="#000"/><path d="M4 12.500H5" stroke="red"/><path d="M12 12.500H13" stroke="#00f"/></svg></i>
      <i><svg viewBox="0 0 16 16"><path d="M1 6V1.500H7M10.500 6V1.500H16" fill="#fff" stroke="#000"/><path d="M3 5L6 2.500" stroke="red"/><path d="M12 3L15 5.500" stroke="#00f"/><path d="M1 12H7M10 12H15" stroke="#000"/><path d="M2 12H6" stroke="red" stroke-width="1.500" stroke-dasharray="1 2"/><path d="M11 12H15" stroke="#00f" stroke-width="1.500" stroke-dasharray="1 2"/><path d="M1 15H16V8" stroke="#a0a0a0" fill="none"/></svg></i>
      <i><svg viewBox="0 0 16 16"><use href="#ins"/><rect x="2" y="2" width="9" height="6" fill="#fff"/><path d="M2 5L4 2.500L6.500 4.500L8.500 2.500L11 5" stroke="#22f" fill="none"/><path d="M2 8L4 6L6.500 8L8.500 6L11 8" stroke="red" fill="none"/><path d="M12 2.500H15M13.500 1V4" stroke="red"/><path d="M1 12.500H7M13 6H14" stroke="#000"/></svg></i>
      <i><svg viewBox="0 0 16 16"><use href="#ins"/><path d="M2 4L4 2.500L6.500 4.500L8.500 2.500L11 4" stroke="#0c0" fill="none"/><path d="M2 5.500L4 4L6.500 6L8.500 4L11 5.500" stroke="#fb0" fill="none"/><path d="M2 7.500L4 6L6.500 7.500L8.500 6L11 7.500" stroke="red" fill="none"/><path d="M12 2.500H15M13.500 1V4" stroke="red"/><path d="M1 12.500H13" stroke="#000" stroke-width="1.200" stroke-dasharray="2 1"/></svg></i>
      <i><svg viewBox="0 0 16 16"><use href="#ins"/><rect x="2" y="2" width="9" height="6" fill="#077"/><path d="M3 3L5 6M5 2.500L8 5H11M8 5V8" stroke="#0e0" fill="none"/><path d="M13 3H14M13 5H14M1 12.500H13" stroke="#000" stroke-width="1.200" stroke-dasharray="2 1"/></svg></i>
      <i><svg viewBox="0 0 16 16"><use href="#ins"/><rect x="2" y="2" width="13" height="6" fill="#000"/><path d="M4.500 2.500V7.500M6.500 3H9V5H6.500V7H9M10.500 3H13V7H10.500M10.500 5H13" fill="none" stroke="#0f0"/><path d="M3 10.500H6M3 13H6M10 12.500H13" stroke="#000" stroke-dasharray="1 1"/></svg></i>
      <i><svg viewBox="0 0 16 16"><use href="#ins"/><rect x="2" y="2.500" width="13" height="4.500" fill="#0e0"/><path d="M3.500 2V7M5.500 2V7M8 3V6M10.500 2V7M12.500 3V6" stroke="#000"/><path d="M3 9.500H13M2 13H14" stroke="#000" stroke-width=".8" stroke-dasharray="1 2"/></svg></i>
      <i><svg viewBox="0 0 16 16"><use href="#ins"/><rect x="2" y="1.500" width="13" height="6" fill="#000"/><path d="M2 3H6L7 4.500H2" fill="none" stroke="#0ee"/><path d="M9.500 4H11.500V7H9.500ZM13.500 3.500V7.500" fill="none" stroke="#0f0"/><path d="M5 9.500H13M2 13H14" stroke="#000" stroke-width=".8" stroke-dasharray="1 2"/></svg></i>
      <i><svg viewBox="0 0 16 16"><path d="M1.500 1V14" stroke="#000" stroke-dasharray="1 1"/><rect x="3" y="1" width="13" height="14" fill="#a0a0a0"/><rect x="4" y="2" width="10" height="12" fill="#000"/><path d="M4 3.500H14M4 6H14" stroke="#808"/><path d="M4 3H6V5H11V3H14" stroke="red" fill="none" stroke-width="1.400"/><path d="M4 8.500H14" stroke="#0ee"/><path d="M4 11.500H14" stroke="#0e0"/></svg></i>
      <i><svg viewBox="0 0 16 16"><use href="#ins"/><rect x="2" y="2" width="9" height="7" fill="#044"/><path d="M3 3.500H11" stroke="#06f"/><path d="M2 8L5 6H11" stroke="red" fill="none"/><path d="M13 3H14M13 5H14" stroke="#000"/><path d="M4 12.500H14" stroke="#000"/><path d="M5 12.500H13" stroke="red" stroke-dasharray="1 2"/></svg></i>
      <i><svg viewBox="0 0 16 16"><use href="#ins"/><rect x="2" y="2" width="13" height="5" fill="#000"/><path d="M7 6.500H8M9 4H10.500V6.500H9ZM12 2V5H14.500M14.500 2V7" stroke="#0f0" fill="none"/><path d="M4 9H10" stroke="#000" stroke-dasharray="1 2"/><path d="M12 12L13 11L14 12L13 13Z" fill="none" stroke="#000" stroke-width=".8"/></svg></i>
      <i><svg viewBox="0 0 16 16"><use href="#ins"/><rect x="2" y="2" width="13" height="6" fill="#000"/><path d="M3.500 6V8M5.500 4V8M7.500 3V8M9.500 2.500V8M11.500 4V8M13.500 6V8" stroke="#0f0"/><path d="M3 9.500H7M9 12.500H14" stroke="#000" stroke-dasharray="1 1"/></svg></i>
      <i><svg viewBox="0 0 16 16"><use href="#ins"/><rect x="2" y="2" width="9" height="6" fill="#0c0"/><path d="M3 3L6 7M6 3L3 7M7 3L10 7M10 3L7 7" stroke="#030"/><path d="M14 2V6" stroke="#000" stroke-dasharray="1 1"/><path d="M9 12.500H14" stroke="#000" stroke-dasharray="2 1"/></svg></i>
      <i><svg viewBox="0 0 16 16"><use href="#ins"/><rect x="2" y="2" width="13" height="4" fill="#043"/><path d="M2 5L5 3L8 5L11 3L14 5" stroke="#0e0" fill="none"/><path d="M3 12H6M4.500 10.500V13.500" stroke="#000"/><text class="tiny blue" x="7" y="14" textLength="8">AG</text></svg></i>
      <i><svg viewBox="0 0 16 16"><path d="M1 5V1.500H9" fill="none" stroke="#000"/><rect x="2" y="2.500" width="9" height="5" fill="#fff"/><path d="M7 7L11 3" stroke="#00f"/><path d="M12 3H15M12 5.500H15M13.500 2V7" stroke="#000" fill="none"/><text class="tiny blue" x="7" y="14" textLength="8">AG</text><path d="M1 15H16V1" fill="none" stroke="#a0a0a0"/></svg></i>
      <i><svg viewBox="0 0 16 16"><use href="#ins"/><rect x="2" y="2" width="9" height="5" fill="#fff"/><path d="M2 4L4 2.500L6.500 4L8.500 2.500L11 4" stroke="#22f" fill="none"/><path d="M2 7L4 5.500L6.500 7L8.500 5.500L11 7" stroke="red" fill="none"/><path d="M12 2.500H15M13.500 1V4" stroke="red"/><path d="M1 12H6" stroke="#000"/><text class="tiny blue" x="7" y="14" textLength="8">AG</text></svg></i>
      <hr>
      <svg class="more" width="12" height="20" viewBox="0 0 12 20"><path d="M1 3L6 7L11 3M1 11L6 15L11 11" fill="none" stroke="#000" stroke-width="3"/></svg>
    </aside>
  </div>

  <div class="sheet">
    <div class="side"><i class="btn"><svg viewBox="0 0 24 24"><path d="M7 6L17 18M17 6L7 18" stroke="#000" stroke-width="3.400"/></svg></i><i class="btn"><svg viewBox="0 0 24 24"><path d="M10 6L15 12L10 18Z" fill="#a0a0a0"/></svg></i><div class="sidebar"><span>Spreadsheet View</span></div></div>
    <div class="sheetmain">
      <div class="log"><div><p><span class="rule">------</span> Checking SPICE netlist for Design1 - January 20, 2022, 1:02:08 PM <span class="rule">------</span></p><p><span class="rule">=======</span> SPICE Netlist check completed, 0 error(s), 0 warning(s) <span class="rule">=======</span></p></div></div>
      <div class="tabs shtabs"><span class="tab">Results</span><span class="tab">Nets</span><span class="tab">Components</span><span class="tab">Copper layers</span><span class="tab active">Simulation</span></div>
    </div>
  </div>

  <div class="statusbar"><span class="s1">-</span><span class="s2"></span><span class="s3">Tran: 1.000 s</span><span class="s4"><i></i><i></i><i></i><i></i><i></i><i></i><i></i></span></div>

  <div class="taskbar">
    <svg class="start" viewBox="0 0 32 32"><path d="M0 4L13 2V15H0ZM15 2L32 0V15H15ZM0 17H13V30L0 28ZM15 17H32V32L15 30Z" fill="#fff"/></svg>
    <div class="search"><svg width="34" height="34" viewBox="0 0 34 34"><circle cx="22" cy="12" r="10" fill="none" stroke="#222" stroke-width="2.200"/><path d="M15 19L2 32" stroke="#222" stroke-width="2.500"/></svg><span>Type here to search</span></div>
    <i class="t first"><svg width="36" height="32" viewBox="0 0 36 32"><path d="M2 1V6H24V1M2 31V26H24V31M2 10H24V22H2ZM31 1V8M31 16V31" fill="none" stroke="#fff" stroke-width="2"/><path d="M29 10H34V15H29Z" fill="#fff"/></svg></i>
    <i class="t"><svg width="42" height="44" viewBox="0 0 42 44"><path d="M0 20Q3 0 22 0Q41 1 41 22V26H14Q15 36 27 36Q34 36 39 33V41Q33 44 25 44Q8 43 6 27Q6 15 17 11Q4 12 0 20ZM14 19H28Q28 10 21 10Q15 11 14 19Z" fill="#0a78d6"/></svg></i>
    <i class="t"><svg width="44" height="38" viewBox="0 0 44 38"><path d="M0 0H18L21 4H44V37H0Z" fill="#e8a33d"/><path d="M0 6H44V37H0Z" fill="#ffd467"/><path d="M8 37V22Q8 20 10 20H35Q37 20 37 22V37H29V29H16V37Z" fill="#3f95dc"/></svg></i>
    <i class="t"><svg width="46" height="46" viewBox="0 0 46 46"><path d="M12 10V1H34V10" fill="none" stroke="#2cb5f0" stroke-width="3.500"/><path d="M0 8H46V42Q46 46 42 46H4Q0 46 0 42Z" fill="#f4f4f4"/><path d="M14 18H22V26H14Z" fill="#f25022"/><path d="M24 18H32V26H24Z" fill="#7fba00"/><path d="M14 28H22V36H14Z" fill="#00a4ef"/><path d="M24 28H32V36H24Z" fill="#ffb900"/></svg></i>
    <i class="t current"><svg width="44" height="46"><use href="#multi"/></svg></i>
    <div class="tray">
      <svg width="26" height="18" viewBox="0 0 26 18"><path d="M2 15L13 4L24 15" fill="none" stroke="#fff" stroke-width="2.200"/></svg>
      <svg width="34" height="26" viewBox="0 0 34 26"><path d="M2 6H10V12Q6 16 2 12ZM4 1V6M8 1V6M6 14V24M12 7H30V22H8M31 12H33V18" fill="none" stroke="#fff" stroke-width="2"/><rect x="13" y="10" width="10" height="10" fill="#fff"/></svg>
      <svg width="34" height="28" viewBox="0 0 34 28"><path d="M9 3H32V20H7V10M2 3H9V10H2ZM5 10V26M20 20V26M13 26H27" fill="none" stroke="#fff" stroke-width="2"/></svg>
      <svg width="34" height="32" viewBox="0 0 34 32"><path d="M2 8H6L12 2V26L6 20H2Z" fill="none" stroke="#fff" stroke-width="2"/><circle cx="24" cy="21" r="9.500" fill="#e02030"/><path d="M20 17L28 25M28 17L20 25" stroke="#fff" stroke-width="2.500"/></svg>
      <span class="eng">ENG</span>
      <span class="clock"><b>1:03 PM</b><b>2022-01-20</b></span>
      <svg width="34" height="34" viewBox="0 0 34 34"><path d="M2 2H32V26H22L17 31L12 26H2Z" fill="none" stroke="#fff" stroke-width="2"/></svg>
      <i class="show"></i>
    </div>
  </div>

  <div class="vmstatus">
    <svg viewBox="0 0 30 32" width="30"><rect x="2" y="1" width="26" height="30" rx="3" fill="#57bdf0" stroke="#1a6fc4"/><ellipse cx="15" cy="13" rx="10" ry="10" fill="#fff"/><circle cx="15" cy="13" r="3" fill="#1b63ae"/><path d="M16 14L6 28H12Z" fill="#1b63ae"/></svg>
    <svg viewBox="0 0 32 32" width="32"><circle cx="16" cy="16" r="15" fill="#c4c4c4" stroke="#999"/><circle cx="16" cy="16" r="3.500" fill="none" stroke="#999"/></svg>
    <svg viewBox="0 0 32 32" width="32"><path d="M8 1H31V19H8Z" fill="#1e8fe8" stroke="#fff"/><path d="M1 11H24V28H1Z" fill="#1e8fe8" stroke="#fff" stroke-width="2"/><path d="M5 30H20" stroke="#555" stroke-width="2"/></svg>
    <svg viewBox="0 0 32 32" width="32"><path d="M1 6H12L14 2H30V31H1Z" fill="#bcbcbc" stroke="#999"/></svg>
    <svg viewBox="0 0 32 32" width="32"><path d="M1 2H31V26H1Z" fill="#1e8fe8" stroke="#555"/><path d="M8 8H24V21H8Z" fill="none" stroke="#fff" stroke-width="2"/><path d="M6 29H26" stroke="#eee" stroke-width="4"/></svg>
    <svg viewBox="0 0 32 32" width="32"><path d="M1 10H26V30H1Z" fill="#1583e4" stroke="#fff"/><path d="M14 1H31V16H14ZM6 4L14 7V13L6 15Z" fill="#6f8fe8" stroke="#2347a8"/></svg>
    <svg viewBox="0 0 32 32" width="32"><rect x="3" y="1" width="17" height="30" fill="#7f9cf0" stroke="#2d44a0"/><path d="M1.500 3V30M21.500 3V30" stroke="#2d44a0" stroke-width="2" stroke-dasharray="2 2"/><path d="M7 9L11.500 22L16 9" fill="none" stroke="#fff" stroke-width="3"/><rect x="25" y="1" width="6" height="29" fill="#ddd" stroke="#000" stroke-width="2"/><rect x="26" y="15" width="4" height="14" fill="#8ce000"/></svg>
    <svg viewBox="0 0 32 32" width="32"><ellipse cx="15" cy="16" rx="14" ry="15" fill="#7fd0f4" stroke="#2a7fc0"/><path d="M6 26Q8 6 22 4" fill="none" stroke="#1c5fa0"/><path d="M16 9L31 18L22 31L14 31L20 22Z" fill="#8fe03c" stroke="#3a8a10"/></svg>
    <svg viewBox="0 0 32 32" width="32"><rect x="1" y="1" width="30" height="30" rx="2" fill="#5fc3f2" stroke="#2a7fc0"/><path d="M13 7H19V16H24L16 25L8 16H13Z" fill="#b8f04c" stroke="#3a8a10"/></svg>
    <span>Left ⌘</span>
  </div>
</main>

<footer class="desktop">
  <div class="rock"></div><div class="wa"></div><div class="wb"><svg width="18" height="4" viewBox="0 0 18 4"><path d="M0 0L4 4M11 1H13M15 1H17" stroke="#222" stroke-width="2"/></svg></div><div class="wc"></div>
  <div class="dock">
    <svg class="app" viewBox="0 0 74 74"><rect width="74" height="74" rx="17" fill="url(#gb)"/><path d="M41 0H57Q74 0 74 17V57Q74 74 57 74H46Q42 62 43 43H32Q33 15 41 0Z" fill="#e3e9f2"/><path d="M20 21V28M55 21V28M15 49Q37 69 60 49" fill="none" stroke="#1c2733" stroke-width="3" stroke-linecap="round"/></svg>
    <svg class="app" viewBox="0 0 74 74"><rect width="74" height="74" rx="17" fill="#1c1537"/><circle cx="37" cy="37" r="32" fill="url(#gi)" stroke="#a08fc0"/><path d="M14 33A24 24 0 0 1 60 30L37 37Z" fill="#d8447f" opacity=".6"/><path d="M12 52L37 34L66 44M27 14L37 34L46 64" fill="none" stroke="#dff" stroke-width="3"/></svg>
    <svg class="app" viewBox="0 0 74 74"><rect width="74" height="74" rx="17" fill="#d5d5d7"/><g><rect x="12" y="13" width="14" height="13" rx="3" fill="#76d25b"/><rect x="30" y="13" width="14" height="13" rx="3" fill="#f2b83a"/><rect x="48" y="13" width="14" height="13" rx="3" fill="#ea8c36"/><rect x="12" y="31" width="14" height="13" rx="3" fill="#d03a34"/><rect x="30" y="31" width="14" height="13" rx="3" fill="#9a9fa2"/><rect x="48" y="31" width="14" height="13" rx="3" fill="#e8475f"/><rect x="12" y="49" width="14" height="13" rx="3" fill="#8b48c9"/><rect x="30" y="49" width="14" height="13" rx="3" fill="#3c80ee"/><rect x="48" y="49" width="14" height="13" rx="3" fill="#58bf94"/></g></svg>
    <svg class="app" viewBox="0 0 74 74"><rect width="74" height="74" rx="17" fill="url(#gw)"/><circle cx="37" cy="37" r="32" fill="#3b8bea"/><circle cx="37" cy="37" r="28.500" fill="none" stroke="#cfe4fa" stroke-width="4" stroke-dasharray="1 2"/><path d="M60 17L41 41L33 33Z" fill="#e5493d"/><path d="M15 57L33 33L41 41Z" fill="#f2f2f2"/></svg>
    <svg class="app" viewBox="0 0 74 74"><rect width="74" height="74" rx="17" fill="url(#gm)"/><rect x="11" y="21" width="52" height="32" rx="2" fill="#f0f0f0"/><path d="M11 21L33 42Q37 45 41 42L63 21M11 53L31 38M63 53L43 38" fill="none" stroke="#8a8a8a" stroke-width="1.500"/></svg>
    <svg class="app" viewBox="0 0 74 74"><path d="M70 10H74V66H70Z" fill="#cfcfcf"/><path d="M70 25H75V38H70Z" fill="#66b6e0"/><path d="M70 40H75V51H70Z" fill="#ef9a3a"/><path d="M70 52H75V64H70Z" fill="#77c95a"/><rect width="72" height="74" rx="15" fill="#a9804c"/><circle cx="38" cy="37" r="23" fill="none" stroke="#86642f" stroke-width="2"/><circle cx="38" cy="31" r="9" fill="#8f6c39"/><path d="M21 52Q23 44 38 43Q53 44 55 52Q48 60 38 60Q28 60 21 52Z" fill="#8f6c39"/></svg>
    <div class="app cal"><span>JAN</span><b>20</b></div>
    <svg class="app" viewBox="0 0 74 74"><rect width="74" height="74" rx="17" fill="#f2f1ed"/><path d="M0 18V17Q0 0 17 0H57Q74 0 74 17V18Z" fill="#f8cf48"/><path d="M0 20H74" stroke="#8e8a80" stroke-width="1.500"/><path d="M2 23H72" stroke="#aaa" stroke-dasharray="1 2"/><path d="M0 37H74M0 55H74" stroke="#ccc9c2"/></svg>
    <svg class="app" viewBox="0 0 74 74"><rect width="74" height="74" rx="17" fill="#fafafa"/><path d="M27 18H65M27 37H65M27 55H65" stroke="#b5b5b5" stroke-width="1.500"/><circle cx="14" cy="18" r="5" fill="#2f7cf6" stroke="#dce9fd" stroke-width="2"/><circle cx="14" cy="37" r="5" fill="#ec4b3c" stroke="#fde2df" stroke-width="2"/><circle cx="14" cy="55" r="5" fill="#f19a37" stroke="#fdeedc" stroke-width="2"/></svg>
    <svg class="app clip" viewBox="0 0 74 74"><rect width="74" height="74" fill="#a6db7c"/><path d="M0 0H22L74 74H0Z" fill="#f5c84b"/><path d="M0 34L40 74H0Z" fill="#f3b8c2"/><path d="M36 0Q40 36 74 40" fill="none" stroke="#f5f5f2" stroke-width="9"/><path d="M18 0V74" stroke="#f3f2ee" stroke-width="17"/><path d="M18 0V40" stroke="#3680ea" stroke-width="9"/><circle cx="18" cy="44" r="12" fill="#fff"/><circle cx="18" cy="44" r="8" fill="#3680ea"/><path d="M43 50Q57 44 69 50Q71 64 56 71Q41 64 43 50Z" fill="#3a7bd0" stroke="#fff" stroke-width="1.500"/><path d="M43 50Q57 44 69 50V54H43Z" fill="#d83a3a"/><text x="56" y="65" class="i280">280</text></svg>
    <svg class="app" viewBox="0 0 74 74"><rect width="74" height="74" rx="17" fill="#fafafa"/><g transform="translate(37 37)" opacity=".85"><rect x="-10" y="-32" width="20" height="30" rx="10" fill="#f29a38"/><rect x="-10" y="-32" width="20" height="30" rx="10" fill="#efd53f" transform="rotate(45)"/><rect x="-10" y="-32" width="20" height="30" rx="10" fill="#a8cf56" transform="rotate(90)"/><rect x="-10" y="-32" width="20" height="30" rx="10" fill="#5eb884" transform="rotate(135)"/><rect x="-10" y="-32" width="20" height="30" rx="10" fill="#58a5e0" transform="rotate(180)"/><rect x="-10" y="-32" width="20" height="30" rx="10" fill="#7d7fd0" transform="rotate(225)"/><rect x="-10" y="-32" width="20" height="30" rx="10" fill="#b57bbd" transform="rotate(270)"/><rect x="-10" y="-32" width="20" height="30" rx="10" fill="#ea5a4d" transform="rotate(315)"/></g></svg>
    <svg class="app" viewBox="0 0 74 74"><rect width="74" height="74" rx="17" fill="url(#gg)"/><path d="M37 12Q63 13 64 35Q63 57 37 58Q31 58 27 57Q24 61 19 61Q22 58 21 54Q10 47 10 35Q11 13 37 12Z" fill="url(#gw)"/></svg>
    <svg class="app" viewBox="0 0 74 74"><rect width="74" height="74" rx="17" fill="url(#gg)"/><rect x="11" y="21" width="36" height="32" rx="8" fill="url(#gw)"/><path d="M49 33L62 22V52L49 42Z" fill="#ecf6ea"/></svg>
    <svg class="app" viewBox="0 0 74 74"><rect width="74" height="74" rx="17" fill="url(#gp)"/><path d="M27 58A25 25 0 1 1 47 58M29 48A16 16 0 1 1 45 48" fill="none" stroke="#fff" stroke-width="3.500"/><circle cx="37" cy="33" r="6" fill="#fff"/><path d="M31 46Q37 38 43 46L40 63Q37 67 34 63Z" fill="#fff"/></svg>
    <svg class="app" viewBox="0 0 74 74"><rect width="74" height="74" rx="17" fill="url(#gr)"/><path d="M28 55V19L53 13V49" fill="none" stroke="#fff" stroke-width="3.500"/><path d="M27 17L54 11V22L27 28Z" fill="#fff"/><ellipse cx="22" cy="55" rx="7.500" ry="6" fill="#fff"/><ellipse cx="47" cy="50" rx="7.500" ry="6" fill="#fff"/></svg>
    <div class="app tv"><svg width="22" height="28" viewBox="0 0 26 32"><use href="#apple"/></svg><span>tv</span></div>
    <svg class="app" viewBox="0 0 74 74"><rect width="74" height="74" rx="17" fill="url(#gs)"/><circle cx="37" cy="37" r="31" fill="#303234"/><circle cx="37" cy="37" r="27.500" fill="none" stroke="#8c9092" stroke-width="4" stroke-dasharray="2 1.500"/><circle cx="37" cy="37" r="23" fill="#45484a" stroke="#b4b7b8" stroke-width="3"/><circle cx="37" cy="37" r="14" fill="#6f7375" stroke="#2a2c2d" stroke-width="2"/><path d="M37 37H60M37 37L26 17M37 37L26 57" stroke="#c4c7c8" stroke-width="3"/></svg>
    <svg class="app" viewBox="0 0 74 74"><rect width="74" height="74" rx="17" fill="url(#gb)"/><path d="M33 15L56 57M41 15L22 48M18 53L16 57M13 45H41M50 45H61" stroke="#fff" stroke-width="6" stroke-linecap="round"/></svg>
    <svg class="app" viewBox="0 0 74 74"><rect width="74" height="74" rx="17" fill="#f3f3f3"/><rect x="5" y="6" width="63" height="62" rx="12" fill="#a4c2ec"/><path d="M5 39H68V56Q68 68 56 68H17Q5 68 5 56Z" fill="#27457a"/><path d="M6 52L24 48L40 56L30 67H14Z" fill="#d8dde0"/><path d="M39 49H69L75 74Q56 80 33 74Z" fill="#d9dbdb" stroke="#777"/><rect x="37" y="37" width="34" height="15" rx="3" fill="#16181a"/><path d="M45 56H62V68H43Z" fill="#eef" stroke="#899"/></svg>
    <i class="div"></i>
    <svg class="app"><use href="#chrome"/></svg>
    <svg class="app zoomapp" viewBox="0 0 81 81"><rect width="81" height="81" rx="26" fill="#437ef2"/><use href="#cam" x="15" y="26" width="51" height="28"/></svg>
    <svg class="vbox" viewBox="0 0 72 88"><ellipse cx="36" cy="77" rx="21" ry="9" fill="#a9b8d8"/><path d="M36 0L71 20L65 60L36 81L6 60L0 20Z" fill="#c8d1e4"/><path d="M36 5L62 20L36 37L10 20Z" fill="#203a66" stroke="#fff"/><path d="M4 27L32 43V74L10 57ZM68 27L41 43V74L62 57Z" fill="#1d3a6c"/><path d="M26 18L34 14V22L40 15V23L48 18M28 23L44 27" stroke="#fff" stroke-width="2" fill="none"/><text class="vbt" textLength="23" lengthAdjust="spacingAndGlyphs" transform="translate(9 43) rotate(34)">ORACLE</text><text class="vbt" textLength="26" lengthAdjust="spacingAndGlyphs" transform="translate(43 60) rotate(-36)">VirtualBox</text></svg>
    <svg class="vmapp" viewBox="0 0 90 92"><rect width="88" height="87" rx="4" fill="#dfe0e1" stroke="#999"/><rect x="4" y="5" width="80" height="67" fill="#060606"/><rect x="4" y="22" width="80" height="33" fill="#f2f2f2"/><rect x="64" y="27" width="17" height="16" fill="#aaa"/><path d="M20 32H50V45H20M42 32V44" fill="none" stroke="#e08080"/><rect x="59" y="61" width="31" height="31" fill="#55bce9"/><path d="M59 76L90 70M75 61L66 92" stroke="#123a5c" stroke-width="2"/><path d="M59 80L75 92H59Z" fill="#2b3238"/><rect x="60" y="62" width="13" height="9" fill="#eee"/><text x="61" y="70" class="b64">64</text><text x="73" y="88" class="b10">10</text></svg>
    <i class="div d2"></i>
    <svg class="min1" viewBox="0 0 86 76"><rect width="86" height="66" fill="#242426"/><path d="M0 0H86V5H0Z" fill="#333"/><rect x="45" y="14" width="34" height="14" fill="#335063"/><text x="52" y="22" class="b10">2:34 PM</text><rect x="77" y="14" width="3" height="13" fill="#6fc3a4"/><circle cx="15" cy="26" r="4.500" fill="#f07440"/><circle cx="30" cy="26" r="4.500" fill="#304770"/><circle cx="15" cy="43" r="4.500" fill="#2f7bea"/><circle cx="30" cy="43" r="4.500" fill="#304770"/><rect x="55" y="45" width="30" height="30" rx="9" fill="#437ef2"/><use href="#cam" x="60" y="55" width="20" height="11"/></svg>
    <svg class="min2" viewBox="0 0 86 66"><rect width="86" height="48" fill="#f6f7f8"/><rect width="86" height="6" fill="#33363c"/><path d="M30 23H58M29 26H58M24 28.500H61M34 41H54M34 44H52" stroke="#bbb"/><rect x="38" y="31" width="11" height="4" fill="#3a7de0"/><use href="#chrome" x="56" y="39" width="27" height="27"/></svg>
    <svg class="trash" viewBox="0 0 66 88"><path d="M2 16L8 4L18 8L26 0L34 7L44 2L52 10L60 7L64 18L50 24H14Z" fill="#e8e8e8" stroke="#888"/><path d="M14 12L24 18M30 8L40 16M46 8L54 14" stroke="#766" stroke-width="2"/><path d="M28 14H36V20H28Z" fill="#5aa7c8"/><path d="M0 14Q33 30 65 14L57 80Q33 92 9 80Z" fill="url(#gt)"/><path d="M0 14Q33 28 65 14" fill="none" stroke="#aaa" stroke-width="2"/></svg>
  </div>
  <div class="running"><i></i><i></i><i></i><i></i><i></i></div>
</footer>
</body>
</html>
```
FILE: styles.css
```css
* { box-sizing: border-box; }
body { margin: 0; width: 2880px; height: 1800px; overflow: hidden; display: flex; flex-direction: column; background: #101012; font-family: "Open Sans", "Noto Sans", sans-serif; font-size: 23px; color: #000; }
i, b { font-style: normal; }
p, h1 { margin: 0; }
span, p { white-space: nowrap; }
.defs { position: absolute; }
u { text-decoration: none; border-bottom: 2px solid #000; display: inline-block; line-height: 24px; }

/* mac menu bar */
.macbar { height: 50px; flex: none; display: flex; justify-content: space-between; background: linear-gradient(90deg, #a16b6e, #a17176 70%, #937484); border-bottom: 2px solid #a5605c; color: #f5efef; font: 25px/48px Inter, sans-serif; text-shadow: 0 1px 4px rgba(60,20,20,.5); }
.macmenu { display: flex; padding-left: 44px; line-height: 47px; }
.applelogo { width: 26px; height: 32px; margin: 6px 44px 0 0; }
.macmenu b { width: 224px; font-weight: 700; letter-spacing: -.3px; }
.macmenu span:nth-of-type(1) { width: 144px; }
.macmenu span:nth-of-type(2) { width: 100px; }
.macmenu span:nth-of-type(3) { width: 102px; }
.macmenu span:nth-of-type(4) { width: 136px; }
.macmenu span:nth-of-type(5) { width: 138px; }
.macstatus { width: 1313px; display: flex; align-items: center; line-height: 46px; }
.macstatus svg { flex: none; }
.macstatus svg:nth-of-type(1) { margin-right: 34px; }
.macstatus svg:nth-of-type(2) { margin-right: 42px; }
.macstatus svg:nth-of-type(3) { margin-right: 41px; }
.macstatus svg:nth-of-type(4) { margin-right: 37px; }
.macstatus svg:nth-of-type(5) { margin-right: 35px; }
.macstatus svg:nth-of-type(6) { margin-right: 35px; }
.macstatus svg:nth-of-type(7) { margin-right: 39px; }
.macstatus svg:nth-of-type(8) { margin-right: 35px; }
.macstatus svg:nth-of-type(9) { margin-right: 35px; }
.macstatus span:nth-of-type(1) { width: 192px; letter-spacing: .1px; }
.macstatus span:nth-of-type(2) { letter-spacing: .15px; }
.macstatus svg:nth-of-type(10) { margin-right: 36px; }
.macstatus svg:nth-of-type(11) { margin-right: 32px; }
.macstatus svg:nth-of-type(12) { margin-right: 33px; }

/* virtual machine window */
.vm { flex: none; height: 1603px; display: flex; flex-direction: column; }
.vm > * { flex: none; }
.vmtitle { height: 56px; display: grid; grid-template-columns: 400px 1fr 400px; align-items: center; background: linear-gradient(#ededed, #d2d2d2); border-top: 2px solid #f6f6f6; border-bottom: 2px solid #b0b0b0; border-radius: 20px 20px 0 0; }
.vmtitle h1 { text-align: center; font: 700 26px/48px Inter, sans-serif; color: #2a2a2a; letter-spacing: .15px; padding: 0 4px 2px 0; }
.lights { display: flex; gap: 16px; padding-left: 16px; }
.lights i { width: 24px; height: 24px; border-radius: 50%; background: #ee6a5f; border: 1px solid #d6564b; }
.lights i:nth-child(2) { background: #f5bf4f; border-color: #d9a23b; }
.lights i:nth-child(3) { background: #61c554; border-color: #4caa3e; }

.wtitle { height: 48px; display: flex; align-items: center; background: #fff; border-bottom: 2px solid #a0a0a0; padding: 0 38px 0 4px; letter-spacing: .05px; }
.wicon { width: 30px; height: 30px; margin-right: 12px; opacity: .9; }
.wctl { width: 204px; height: 24px; margin: 0 1px 2px auto; }
.menubar { height: 50px; display: flex; align-items: center; background: #f0f0f0; border-top: 2px solid #fff; border-bottom: 2px solid #a0a0a0; border-right: 2px solid #a0a0a0; padding: 0 2px 2px 8px; letter-spacing: -.35px; }
.menubar > svg { margin: 4px 15px 0 0; }
.menubar > span:nth-of-type(1) { width: 64px; }
.menubar > span:nth-of-type(2) { width: 65px; }
.menubar > span:nth-of-type(3) { width: 77px; }
.menubar > span:nth-of-type(4) { width: 82px; }
.menubar > span:nth-of-type(5) { width: 79px; }
.menubar > span:nth-of-type(6) { width: 119px; letter-spacing: -.2px; }
.menubar > span:nth-of-type(7) { width: 109px; letter-spacing: -.8px; }
.menubar > span:nth-of-type(8) { width: 83px; }
.menubar > span:nth-of-type(9) { width: 105px; }
.menubar > span:nth-of-type(10) { width: 110px; }
.menubar > span:nth-of-type(11) { width: 114px; letter-spacing: 0; }
.mdictl { margin-left: auto; display: flex; gap: 3px; padding: 10px 3px 0 0; }
.btn { display: block; width: 29px; height: 30px; background: #f0f0f0; border: 2px solid; border-color: #fff #696969 #696969 #fff; box-shadow: inset -2px -2px #a0a0a0; }
.btn svg { display: block; width: 24px; height: 24px; }

.toolrow { height: 54px; display: flex; background: #f0f0f0; }
.group { height: 54px; display: flex; align-items: center; border: 2px solid; border-color: #fff #a0a0a0 #a0a0a0 #fff; }
.c { width: 44px; height: 44px; flex: none; display: flex; align-items: center; justify-content: center; }
.c svg { width: 32px; height: 32px; overflow: visible; }
.wide { width: 48px; }
.on { background: #f7f7f7; border: 2px solid; border-color: #a0a0a0 #fff #fff #a0a0a0; }
.sep { flex: none; width: 4px; height: 42px; margin: 0 6px; border-left: 2px solid #a0a0a0; border-right: 2px solid #fff; }
.caret { border: 6px solid transparent; border-top-color: #000; border-bottom: 0; margin: 0 5px 0 4px; }
.caret.first { margin-right: 7px; }
.s2nd { margin-left: 11px; }
.g1 { width: 559px; padding-left: 21px; }
.g2 { width: 1136px; padding-left: 23px; }
.g3 { width: 248px; margin-left: 339px; padding-left: 21px; }
.g4 { width: 116px; margin-left: 54px; padding-left: 21px; }
.combo { width: 295px; height: 42px; flex: none; background: #e1e1e1; border: 2px solid #acacac; display: flex; align-items: center; justify-content: space-between; padding: 0 6px; letter-spacing: -.1px; margin: 0 2px 0 0; }
.h1 { width: 939px; padding-left: 21px; }
.h2 { width: 450px; padding-left: 22px; }
.h2 svg { flex: none; }
.h2 .label { margin-left: 5px; letter-spacing: -.4px; margin-top: -2px; }
.stop { margin-right: 7px; }
.h3 { width: 380px; padding-left: 21px; }
.pr { fill: none; stroke: #679063; stroke-width: 1.5; }
.tiny { font: 700 6px "Liberation Sans", sans-serif; }
.mcu { font-size: 5px; }
.blue { fill: #0000f0; }

/* work area */
.work { height: 818px; display: flex; background: #f0f0f0; }
.toolbox { width: 397px; height: 810px; border-top: 2px solid #fff; border-right: 2px solid #808080; border-bottom: 2px solid #a0a0a0; padding: 6px 0 0 6px; display: flex; flex-direction: column; }
.tbhead { height: 36px; display: flex; align-items: center; gap: 4px; }
.tbhead span { width: 303px; height: 35px; padding-left: 6px; line-height: 30px; background: linear-gradient(90deg, #bfcfdf, #d6e4f2); margin-right: 1px; letter-spacing: -.15px; }
.tbhead .btn { width: 28px; height: 27px; }
.tbhead .btn svg { height: 22px; }
.tbpanel { width: 367px; height: 711px; margin-top: 6px; border: 2px solid; border-color: #e3e3e3 #696969 #696969 #fff; box-shadow: inset -2px -2px #a0a0a0; padding: 0 4px 4px 1px; display: flex; flex-direction: column; }
.tbtools { height: 52px; display: flex; align-items: center; }
.tbtools .c { width: 52px; height: 50px; }
.tbtools .raised { border: 2px solid; border-color: #fff #696969 #696969 #fff; }
.tbtools .last { margin-left: auto; margin-right: -3px; }
.tree { flex: 1; background: #fff; border: 2px solid #828790; display: grid; grid-template: 36px 36px 1fr / 82px 1fr; }
.treelines { width: 84px; height: 70px; grid-area: 1 / 1 / 3 / 2; margin-left: 16px; margin-top: -2px; }
.node { grid-column: 2; line-height: 38px; padding-left: 6px; }
.n2 { display: flex; align-items: center; padding: 0; margin: 0 0 0 2px; }
.n2 span { background: #f0f0f0; height: 35px; line-height: 33px; padding: 0 6px 0 5px; margin-left: 5px; }
.tabs { display: flex; align-items: flex-start; }
.tab { border: 2px solid; border-color: transparent #696969 #696969 #fff; box-shadow: inset -2px -2px #a0a0a0; background: #f0f0f0; font-size: 22px; letter-spacing: -.5px; height: 36px; line-height: 30px; }
.tbtabs { padding-left: 3px; }
.tbtabs .tab { margin: 0 0 0 1px; width: 97px; padding-left: 6px; }
.tbtabs .active { width: 118px; height: 43px; line-height: 44px; margin: -2px 0 0; padding-left: 9px; letter-spacing: -.1px; }
.tbtabs .tab:nth-child(3) { width: 140px; padding-left: 5px; margin-left: 2px; letter-spacing: -.65px; }

.mdi { width: 2431px; display: flex; flex-direction: column; }
.docframe { height: 765px; border: 2px solid #696969; border-left: 0; padding: 8px 8px 8px 7px; }
.canvaswrap { border: 2px solid; border-color: #696969 #fff #fff #696969; height: 742px; display: flex; }
.circuit { flex: none; width: 2376px; height: 736px; }
.scroll { width: 34px; height: 736px; flex: none; background: #f0f0f0; border-left: 2px solid #fff; border-right: 2px solid #e3e3e3; display: flex; flex-direction: column; }
.scroll i { height: 378px; background: #cdcdcd; }
.scroll .down { margin-top: auto; }
.dots { stroke: #222; stroke-width: 2; stroke-dasharray: 2 14.21; shape-rendering: crispEdges; fill: none; }
.ruler { stroke: #808080; stroke-width: 2; fill: none; }
.rl { font: 19px "Liberation Sans", sans-serif; fill: #888; text-anchor: middle; }
.wire { fill: none; stroke: #f00; stroke-width: 2; }
.dot { fill: #f00; }
.sym, .zig { fill: none; stroke: #000; stroke-width: 2; }
.lb { font: 700 24px "Liberation Sans", sans-serif; fill: #1a1a1a; }
.note { font: 24px "Liberation Sans", sans-serif; fill: #111; }
.doctabs { height: 54px; display: flex; justify-content: space-between; padding: 0 6px 0 6px; }
.doctab { width: 157px; height: 45px; border-right: 3px solid #111; border-bottom: 3px solid #111; border-left: 2px solid #fff; border-radius: 0 0 4px 4px; display: flex; align-items: center; padding-left: 5px; gap: 8px; letter-spacing: -.35px; }
.doctabs .btn { width: 30px; margin-top: 9px; }
.instruments { width: 52px; height: 810px; border-right: 2px solid #a0a0a0; border-bottom: 2px solid #a0a0a0; border-top: 2px solid #a0a0a0; display: flex; flex-direction: column; align-items: center; padding-top: 25px; }
.instruments > i { height: 42px; display: flex; align-items: center; }
.instruments > i svg { width: 32px; height: 32px; }
.instruments hr { width: 44px; margin: 6px 0 0; border: 0; border-top: 2px solid #a0a0a0; border-bottom: 2px solid #fff; }
.more { margin: 36px 0 0 16px; }

/* spreadsheet view */
.sheet { height: 358px; display: flex; background: #f0f0f0; border-top: 2px solid #696969; }
.side { width: 46px; display: flex; flex-direction: column; padding: 4px 0 0 8px; }
.side .btn { width: 27px; height: 28px; margin-bottom: 4px; }
.sidebar { margin: 1px 0 0 -4px; width: 36px; height: 277px; background: linear-gradient(#d6e4f2, #bccbdb); display: flex; }
.sidebar span { writing-mode: vertical-rl; transform: rotate(180deg); line-height: 34px; width: 33px; letter-spacing: .45px; padding-top: 8px; }
.sheetmain { width: 2827px; padding-top: 10px; }
.log { height: 296px; border: 2px solid; border-color: #fff #696969 #696969 #fff; box-shadow: inset -2px -2px #a0a0a0; padding: 2px 6px 6px 1px; }
.log div { height: 286px; border: 2px solid #828790; background: #fff; padding: 2px 15px; }
.log p { line-height: 38px; letter-spacing: -.14px; }
.rule { letter-spacing: 3.1px; }
.log p + p .rule { letter-spacing: 2.95px; }
.shtabs { padding-left: 6px; gap: 4px; }
.shtabs .tab { width: 90px; padding-left: 6px; line-height: 32px; }
.shtabs .tab:nth-child(2) { width: 81px; }
.shtabs .tab:nth-child(3) { width: 140px; letter-spacing: -.95px; }
.shtabs .tab:nth-child(4) { width: 150px; letter-spacing: -.35px; }
.shtabs .active { width: 124px; height: 43px; line-height: 46px; margin-top: -4px; padding-left: 10px; border-top-color: #f0f0f0; letter-spacing: -1.1px; }
.statusbar { height: 42px; display: flex; background: #f0f0f0; border-top: 2px solid #a0a0a0; box-shadow: inset 0 2px #fff; padding-top: 6px; line-height: 34px; letter-spacing: -.7px; }
.statusbar span { border-right: 2px solid #d6d6d6; height: 34px; }
.s1 { width: 2020px; padding-left: 1722px; }
.s2 { width: 366px; }
.s3 { width: 366px; padding-left: 8px; }
.s4 { width: 128px; display: flex; gap: 4px; padding: 3px 0 0 8px; }
.s4 i { width: 12px; height: 25px; border: 2px solid; border-color: #a0a0a0 #e8e4d0 #e8e4d0 #a0a0a0; background: #e4e4e4; }

/* windows taskbar */
.taskbar { height: 80px; background: #101010; display: flex; align-items: center; }
.start { width: 32px; height: 32px; margin: 0 32px; }
.search { width: 688px; height: 80px; background: #f3f3f3; border: 2px solid #bdbdbd; display: flex; align-items: center; gap: 21px; padding-left: 22px; font-size: 29px; letter-spacing: -.6px; color: #222; }
.t { width: 99px; height: 80px; display: flex; align-items: center; justify-content: center; }
.t.first { width: 96px; }
.t.first + .t { width: 102px; }
.current { width: 96px; background: #333; border-bottom: 4px solid #76b9ed; }
.tray { margin-left: auto; width: 499px; height: 80px; display: flex; align-items: center; color: #fff; letter-spacing: -.6px; }
.tray svg { flex: none; }
.tray svg:nth-of-type(1) { margin-right: 17px; }
.tray svg:nth-of-type(2) { margin-right: 15px; }
.tray svg:nth-of-type(3) { margin-right: 14px; }
.tray svg:nth-of-type(4) { margin-right: 18px; }
.eng { width: 70px; margin-top: -2px; letter-spacing: -.2px; }
.clock { width: 120px; margin: -3px 34px 0 0; display: flex; flex-direction: column; align-items: center; line-height: 36px; letter-spacing: -.35px; }
.clock b { font-weight: 400; }
.show { width: 2px; height: 80px; margin-left: 40px; background: #666; }

.vmstatus { height: 43px; background: linear-gradient(#e8e8e8, #b2b2b2); border-top: 1px solid #888; border-bottom: 2px solid #9a9a9a; border-radius: 0 0 22px 22px; display: flex; align-items: center; justify-content: flex-end; gap: 10px; padding-right: 27px; font: 500 25px/40px Inter, sans-serif; }
.vmstatus svg { height: 32px; }
.vmstatus span { margin-left: 2px; letter-spacing: -.6px; width: 77px; }

/* desktop and dock */
.desktop { height: 147px; flex: none; display: grid; grid-template: 1fr / 82px 934px 1fr 180px; }
.desktop > * { grid-row: 1; }
.rock { grid-column: 1; background: linear-gradient(120deg, #08080a, #251c19 40%, #120e0f 60%, #2b2220); }
.wa { grid-column: 2; background: linear-gradient(#858585, #959595 50%, #c9c9c9); }
.wb { grid-column: 3; background: linear-gradient(#989898, #a2a2a2 50%, #dedede); padding: 11px 0 0 17px; }
.wb svg { display: block; }
.wc { grid-column: 4; background: radial-gradient(circle at 100% 100%, #f6f6f6, #ececec 45%, #a4a4a4); }
.dock { grid-column: 1 / 5; width: 2716px; height: 124px; margin: 14px 0 0 82px; border-radius: 38px; background: linear-gradient(90deg, #8c8c8c, #949494 45%, #9a9a9a); border: 2px solid #a8a8a8; outline: 1px solid #555; display: flex; align-items: center; padding: 0 0 10px 17px; gap: 26.560px; }
.app { width: 74px; height: 74px; flex: none; overflow: visible; }
.clip { border-radius: 17px; overflow: hidden; }
.cal { border-radius: 17px; background: linear-gradient(#e4594f 0 23px, #fafafa 23px); text-align: center; color: #222; display: flex; flex-direction: column; font-family: Inter, sans-serif; }
.cal span { font: 600 14px/25px Inter, sans-serif; color: #fff; }
.cal b { font-weight: 300; font-size: 42px; line-height: 44px; letter-spacing: -1px; }
.tv { border-radius: 17px; background: linear-gradient(#2b3835, #0b1012); color: #fff; display: flex; align-items: center; justify-content: center; font: 500 34px/60px Inter, sans-serif; gap: 1px; letter-spacing: -1px; }
.tv svg { margin-top: -4px; }
.i280 { font: 700 11px Inter, sans-serif; fill: #fff; text-anchor: middle; }
.div { flex: none; width: 2px; height: 90px; background: #d5d5d5; margin: 0 6px 0 9px; }
.zoomapp { width: 81px; height: 81px; margin-left: -3px; }
.vbox { flex: none; width: 72px; height: 88px; margin-left: -9px; overflow: visible; }
.vbt { font: 700 7px "Liberation Sans", sans-serif; fill: #fff; }
.b64 { font: 700 9px "Liberation Sans", sans-serif; }
.b10 { font: 700 13px "Liberation Sans", sans-serif; fill: #fff; }
.min1 .b10 { font-size: 6px; }
.vmapp { flex: none; width: 90px; height: 92px; margin-top: 4px; }
.d2 { margin: 0 0 0 2px; }
.min1 { flex: none; width: 86px; height: 76px; margin-top: 8px; }
.min2 { flex: none; width: 86px; height: 66px; margin: 16px 0 0 -12px; }
.trash { flex: none; width: 66px; height: 88px; }
.running { grid-column: 1 / 5; align-self: end; height: 22px; display: flex; padding-left: 134px; }
.running i { width: 8px; height: 8px; border-radius: 50%; background: #fff; margin-right: 93px; }
.running i:first-child { margin-right: 1946px; }
```
